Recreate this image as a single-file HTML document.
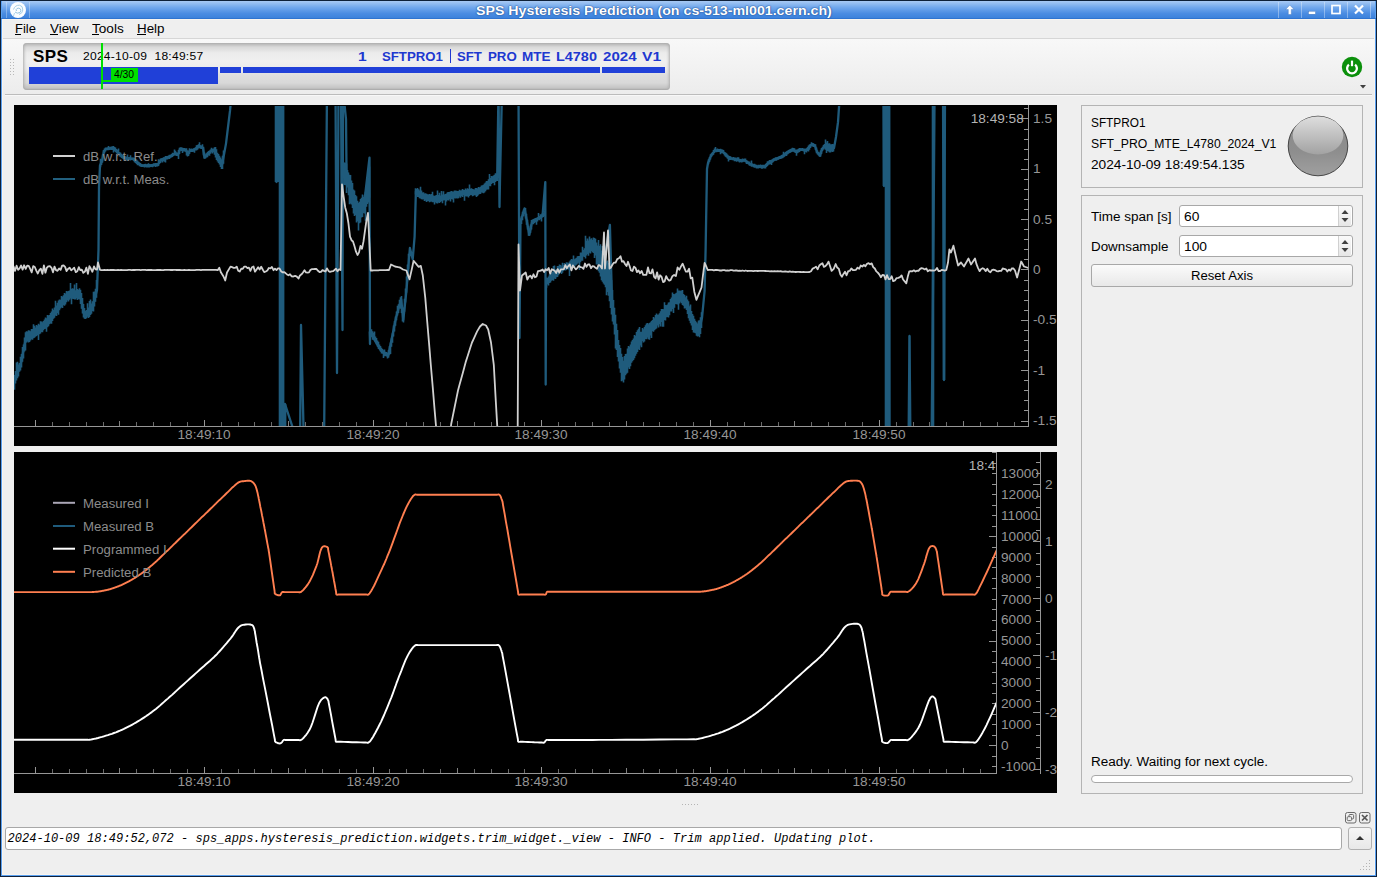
<!DOCTYPE html><html><head><meta charset="utf-8"><style>
html,body{margin:0;padding:0;width:1377px;height:877px;overflow:hidden;background:#efefef;}
body{position:relative;font-family:"Liberation Sans",sans-serif;}
</style></head><body><div style="position:absolute;left:0px;top:0px;width:1377px;height:877px;background:#0e2038;"></div><div style="position:absolute;left:1px;top:1px;width:1375px;height:875px;background:#5aa0f0;"></div><div style="position:absolute;left:2px;top:19px;width:1373px;height:856px;background:#f8f4ef;"></div><div style="position:absolute;left:3px;top:20px;width:1371px;height:854px;background:#efefef;"></div><div style="position:absolute;left:2px;top:1px;width:1373px;height:18px;background:linear-gradient(#a8caf4 0%,#72a8ec 35%,#4a8ce2 70%,#3a80da 100%);"></div><div style="position:absolute;left:1px;top:18px;width:1375px;height:1px;background:#2f74d0;"></div><div style="position:absolute;left:476px;top:4.84px;font:normal bold 12px/12px 'Liberation Sans', sans-serif;color:#fff;letter-spacing:0px;white-space:pre;transform:scaleX(1.183);transform-origin:left top;text-shadow:0 0 1.5px #1a4a90, 0 0 1px #1a4a90;">SPS Hysteresis Prediction (on cs-513-ml001.cern.ch)</div><div style="position:absolute;left:1278px;top:2px;width:1px;height:16px;background:rgba(255,255,255,0.35);"></div><div style="position:absolute;left:1301px;top:2px;width:1px;height:16px;background:rgba(255,255,255,0.35);"></div><div style="position:absolute;left:1324px;top:2px;width:1px;height:16px;background:rgba(255,255,255,0.35);"></div><div style="position:absolute;left:1347px;top:2px;width:1px;height:16px;background:rgba(255,255,255,0.35);"></div><div style="position:absolute;left:1370px;top:2px;width:1px;height:16px;background:rgba(255,255,255,0.35);"></div><svg style="position:absolute;left:9px;top:1px" width="18" height="18"><circle cx="9" cy="9" r="8" fill="#fbfdff"/><path d="M4.5 8.5 Q6 4 10.5 4.2 Q14 4.8 13.8 9 Q13.5 12.5 10 13.5" fill="none" stroke="#9cc8e2" stroke-width="0.9"/><path d="M6 11 Q8 13 11 11.5 Q12.5 10 11.5 8 Q10 6.5 8 7.5 Q6.5 8.5 7.5 10" fill="none" stroke="#8cbede" stroke-width="0.9"/><path d="M5.5 12 L4.5 15" stroke="#a8d0e8" stroke-width="0.9"/></svg><div style="position:absolute;left:6px;top:2px;width:1px;height:16px;background:rgba(255,255,255,0.3);"></div><div style="position:absolute;left:29px;top:2px;width:1px;height:16px;background:rgba(255,255,255,0.3);"></div><svg style="position:absolute;left:1280px;top:2px" width="95" height="16"><path d="M9.8 3 L14 7.5 L11.3 7.5 L11.3 12.5 L8.3 12.5 L8.3 7.5 L5.6 7.5 Z" fill="#fff" stroke="#3a70b8" stroke-width="0.4"/><rect x="28.5" y="9.2" width="7" height="3" fill="#fff" stroke="#3a70b8" stroke-width="0.4"/><rect x="52" y="3.5" width="8" height="8" fill="none" stroke="#fff" stroke-width="1.7"/><path d="M75 3.5 L83 11.5 M83 3.5 L75 11.5" stroke="#fff" stroke-width="2.2"/></svg><div style="position:absolute;left:3px;top:20px;width:1371px;height:18px;background:#efefef;"></div><div style="position:absolute;left:3px;top:38px;width:1371px;height:1px;background:#d6d6d6;"></div><div style="position:absolute;left:15px;top:23.44px;font:normal normal 12px/12px 'Liberation Sans', sans-serif;color:#000;letter-spacing:0px;white-space:pre;transform:scaleX(1.0810810810810811);transform-origin:left top;">File</div><div style="position:absolute;left:49.5px;top:23.44px;font:normal normal 12px/12px 'Liberation Sans', sans-serif;color:#000;letter-spacing:0px;white-space:pre;transform:scaleX(1.1137254901960785);transform-origin:left top;">View</div><div style="position:absolute;left:92px;top:23.44px;font:normal normal 12px/12px 'Liberation Sans', sans-serif;color:#000;letter-spacing:0px;white-space:pre;transform:scaleX(1.1320754716981132);transform-origin:left top;">Tools</div><div style="position:absolute;left:136.8px;top:23.44px;font:normal normal 12px/12px 'Liberation Sans', sans-serif;color:#000;letter-spacing:0px;white-space:pre;transform:scaleX(1.1140350877192982);transform-origin:left top;">Help</div><div style="position:absolute;left:15px;top:34px;width:6px;height:1px;background:#000;"></div><div style="position:absolute;left:50px;top:34px;width:8px;height:1px;background:#000;"></div><div style="position:absolute;left:92px;top:34px;width:7px;height:1px;background:#000;"></div><div style="position:absolute;left:137px;top:34px;width:9px;height:1px;background:#000;"></div><div style="position:absolute;left:3px;top:39px;width:1371px;height:56px;background:linear-gradient(#f8f8f8,#ececec);"></div><div style="position:absolute;left:5px;top:94px;width:1367px;height:1px;background:#bcbcbc;"></div><div style="position:absolute;left:5px;top:95px;width:1367px;height:1px;background:#f8f8f8;"></div><div style="position:absolute;left:10px;top:59px;width:1px;height:1px;background:#b8b8b8;"></div><div style="position:absolute;left:13px;top:59px;width:1px;height:1px;background:#b8b8b8;"></div><div style="position:absolute;left:10px;top:62px;width:1px;height:1px;background:#b8b8b8;"></div><div style="position:absolute;left:13px;top:62px;width:1px;height:1px;background:#b8b8b8;"></div><div style="position:absolute;left:10px;top:65px;width:1px;height:1px;background:#b8b8b8;"></div><div style="position:absolute;left:13px;top:65px;width:1px;height:1px;background:#b8b8b8;"></div><div style="position:absolute;left:10px;top:68px;width:1px;height:1px;background:#b8b8b8;"></div><div style="position:absolute;left:13px;top:68px;width:1px;height:1px;background:#b8b8b8;"></div><div style="position:absolute;left:10px;top:71px;width:1px;height:1px;background:#b8b8b8;"></div><div style="position:absolute;left:13px;top:71px;width:1px;height:1px;background:#b8b8b8;"></div><div style="position:absolute;left:10px;top:74px;width:1px;height:1px;background:#b8b8b8;"></div><div style="position:absolute;left:13px;top:74px;width:1px;height:1px;background:#b8b8b8;"></div><div style="position:absolute;left:23px;top:43px;width:647px;height:47px;border-radius:4px;background:linear-gradient(#b0b0b0 0px,#d8d8d8 4px,#ececec 10px,#f0f0f0 18px,#ebebeb 26px,#dedede 32px,#d8d8d8 40px,#c4c4c4 45px,#a8a8a8 47px);box-shadow:inset 3px 0 3px -2px #aaa, inset -3px 0 3px -2px #aaa;"></div><div style="position:absolute;left:33px;top:47.61px;font:normal bold 17px/17px 'Liberation Sans', sans-serif;color:#000;letter-spacing:0.4px;white-space:pre;">SPS</div><div style="position:absolute;left:83px;top:50.73px;font:normal normal 11.3px/11.3px 'Liberation Sans', sans-serif;color:#000;letter-spacing:0.25px;white-space:pre;transform:scaleX(1.065);transform-origin:left top;">2024-10-09  18:49:57</div><div style="position:absolute;left:29px;top:67px;width:189px;height:17px;background:#2040d8;"></div><div style="position:absolute;left:220px;top:67px;width:21px;height:6px;background:#2040d8;"></div><div style="position:absolute;left:243px;top:67px;width:357px;height:6px;background:#2040d8;"></div><div style="position:absolute;left:602px;top:67px;width:63px;height:6px;background:#2040d8;"></div><div style="position:absolute;left:100.5px;top:43px;width:2px;height:46px;background:#00e000;"></div><div style="position:absolute;left:101px;top:80px;width:10px;height:2px;background:#00e000;"></div><div style="position:absolute;left:111px;top:68px;width:27px;height:14px;background:#00e000;"></div><div style="position:absolute;left:114px;top:69.53px;font:normal normal 10px/10px 'Liberation Sans', sans-serif;color:#000;letter-spacing:0px;white-space:pre;transform:scaleX(1.03);transform-origin:left top;">4/30</div><div style="position:absolute;left:358px;top:50.30px;font:normal bold 13px/13px 'Liberation Sans', sans-serif;color:#2038d0;letter-spacing:0px;white-space:pre;transform:scaleX(1.2);transform-origin:left top;">1</div><div style="position:absolute;left:382px;top:50.30px;font:normal bold 13px/13px 'Liberation Sans', sans-serif;color:#2038d0;letter-spacing:0px;white-space:pre;transform:scaleX(1.015);transform-origin:left top;">SFTPRO1</div><div style="position:absolute;left:450px;top:49px;width:1px;height:14px;background:#2038d0;"></div><div style="position:absolute;left:457px;top:50.30px;font:normal bold 13px/13px 'Liberation Sans', sans-serif;color:#2038d0;letter-spacing:0px;white-space:pre;transform:scaleX(1.01);transform-origin:left top;">SFT</div><div style="position:absolute;left:487.5px;top:50.30px;font:normal bold 13px/13px 'Liberation Sans', sans-serif;color:#2038d0;letter-spacing:0px;white-space:pre;transform:scaleX(1.02);transform-origin:left top;">PRO</div><div style="position:absolute;left:521.8px;top:50.30px;font:normal bold 13px/13px 'Liberation Sans', sans-serif;color:#2038d0;letter-spacing:0px;white-space:pre;transform:scaleX(1.04);transform-origin:left top;">MTE</div><div style="position:absolute;left:556.3px;top:50.30px;font:normal bold 13px/13px 'Liberation Sans', sans-serif;color:#2038d0;letter-spacing:0px;white-space:pre;transform:scaleX(1.11);transform-origin:left top;">L4780</div><div style="position:absolute;left:603px;top:50.30px;font:normal bold 13px/13px 'Liberation Sans', sans-serif;color:#2038d0;letter-spacing:0px;white-space:pre;transform:scaleX(1.16);transform-origin:left top;">2024</div><div style="position:absolute;left:641.5px;top:50.30px;font:normal bold 13px/13px 'Liberation Sans', sans-serif;color:#2038d0;letter-spacing:0px;white-space:pre;transform:scaleX(1.2);transform-origin:left top;">V1</div><svg style="position:absolute;left:1340px;top:55px" width="24" height="24"><circle cx="12" cy="12" r="10.2" fill="#0c900c"/><path d="M8.9 9.6 A4.9 4.9 0 1 0 15.1 9.6" fill="none" stroke="#fff" stroke-width="2.3"/><line x1="12" y1="5.6" x2="12" y2="11.2" stroke="#fff" stroke-width="2.2"/></svg><svg style="position:absolute;left:1359px;top:84px" width="8" height="6"><path d="M1 1 L7 1 L4 4.5 Z" fill="#404040"/></svg><div style="position:absolute;left:14px;top:105px;width:1043px;height:341px;background:#000;overflow:hidden;"><svg width="1043" height="341" style="position:absolute;left:0;top:0" shape-rendering="crispEdges"><line x1="0" y1="321.5" x2="1014" y2="321.5" stroke="#969696" stroke-width="1"/><line x1="1014.5" y1="0" x2="1014.5" y2="322" stroke="#969696" stroke-width="1"/><line x1="21.5" y1="315" x2="21.5" y2="321" stroke="#969696"/><line x1="38.5" y1="317" x2="38.5" y2="321" stroke="#6a6a6a"/><line x1="55.5" y1="317" x2="55.5" y2="321" stroke="#6a6a6a"/><line x1="72.5" y1="317" x2="72.5" y2="321" stroke="#6a6a6a"/><line x1="89.5" y1="317" x2="89.5" y2="321" stroke="#6a6a6a"/><line x1="105.5" y1="316" x2="105.5" y2="321" stroke="#808080"/><line x1="122.5" y1="317" x2="122.5" y2="321" stroke="#6a6a6a"/><line x1="139.5" y1="317" x2="139.5" y2="321" stroke="#6a6a6a"/><line x1="156.5" y1="317" x2="156.5" y2="321" stroke="#6a6a6a"/><line x1="173.5" y1="317" x2="173.5" y2="321" stroke="#6a6a6a"/><line x1="190.5" y1="315" x2="190.5" y2="321" stroke="#969696"/><line x1="207.5" y1="317" x2="207.5" y2="321" stroke="#6a6a6a"/><line x1="224.5" y1="317" x2="224.5" y2="321" stroke="#6a6a6a"/><line x1="240.5" y1="317" x2="240.5" y2="321" stroke="#6a6a6a"/><line x1="257.5" y1="317" x2="257.5" y2="321" stroke="#6a6a6a"/><line x1="274.5" y1="316" x2="274.5" y2="321" stroke="#808080"/><line x1="291.5" y1="317" x2="291.5" y2="321" stroke="#6a6a6a"/><line x1="308.5" y1="317" x2="308.5" y2="321" stroke="#6a6a6a"/><line x1="325.5" y1="317" x2="325.5" y2="321" stroke="#6a6a6a"/><line x1="342.5" y1="317" x2="342.5" y2="321" stroke="#6a6a6a"/><line x1="359.5" y1="315" x2="359.5" y2="321" stroke="#969696"/><line x1="375.5" y1="317" x2="375.5" y2="321" stroke="#6a6a6a"/><line x1="392.5" y1="317" x2="392.5" y2="321" stroke="#6a6a6a"/><line x1="409.5" y1="317" x2="409.5" y2="321" stroke="#6a6a6a"/><line x1="426.5" y1="317" x2="426.5" y2="321" stroke="#6a6a6a"/><line x1="443.5" y1="316" x2="443.5" y2="321" stroke="#808080"/><line x1="460.5" y1="317" x2="460.5" y2="321" stroke="#6a6a6a"/><line x1="477.5" y1="317" x2="477.5" y2="321" stroke="#6a6a6a"/><line x1="494.5" y1="317" x2="494.5" y2="321" stroke="#6a6a6a"/><line x1="510.5" y1="317" x2="510.5" y2="321" stroke="#6a6a6a"/><line x1="527.5" y1="315" x2="527.5" y2="321" stroke="#969696"/><line x1="544.5" y1="317" x2="544.5" y2="321" stroke="#6a6a6a"/><line x1="561.5" y1="317" x2="561.5" y2="321" stroke="#6a6a6a"/><line x1="578.5" y1="317" x2="578.5" y2="321" stroke="#6a6a6a"/><line x1="595.5" y1="317" x2="595.5" y2="321" stroke="#6a6a6a"/><line x1="612.5" y1="316" x2="612.5" y2="321" stroke="#808080"/><line x1="629.5" y1="317" x2="629.5" y2="321" stroke="#6a6a6a"/><line x1="645.5" y1="317" x2="645.5" y2="321" stroke="#6a6a6a"/><line x1="662.5" y1="317" x2="662.5" y2="321" stroke="#6a6a6a"/><line x1="679.5" y1="317" x2="679.5" y2="321" stroke="#6a6a6a"/><line x1="696.5" y1="315" x2="696.5" y2="321" stroke="#969696"/><line x1="713.5" y1="317" x2="713.5" y2="321" stroke="#6a6a6a"/><line x1="730.5" y1="317" x2="730.5" y2="321" stroke="#6a6a6a"/><line x1="747.5" y1="317" x2="747.5" y2="321" stroke="#6a6a6a"/><line x1="764.5" y1="317" x2="764.5" y2="321" stroke="#6a6a6a"/><line x1="780.5" y1="316" x2="780.5" y2="321" stroke="#808080"/><line x1="797.5" y1="317" x2="797.5" y2="321" stroke="#6a6a6a"/><line x1="814.5" y1="317" x2="814.5" y2="321" stroke="#6a6a6a"/><line x1="831.5" y1="317" x2="831.5" y2="321" stroke="#6a6a6a"/><line x1="848.5" y1="317" x2="848.5" y2="321" stroke="#6a6a6a"/><line x1="865.5" y1="315" x2="865.5" y2="321" stroke="#969696"/><line x1="882.5" y1="317" x2="882.5" y2="321" stroke="#6a6a6a"/><line x1="899.5" y1="317" x2="899.5" y2="321" stroke="#6a6a6a"/><line x1="915.5" y1="317" x2="915.5" y2="321" stroke="#6a6a6a"/><line x1="932.5" y1="317" x2="932.5" y2="321" stroke="#6a6a6a"/><line x1="949.5" y1="316" x2="949.5" y2="321" stroke="#808080"/><line x1="966.5" y1="317" x2="966.5" y2="321" stroke="#6a6a6a"/><line x1="983.5" y1="317" x2="983.5" y2="321" stroke="#6a6a6a"/><line x1="1000.5" y1="317" x2="1000.5" y2="321" stroke="#6a6a6a"/><line x1="1007" y1="316.5" x2="1014" y2="316.5" stroke="#969696"/><line x1="1010" y1="305.5" x2="1014" y2="305.5" stroke="#969696"/><line x1="1010" y1="295.5" x2="1014" y2="295.5" stroke="#969696"/><line x1="1010" y1="285.5" x2="1014" y2="285.5" stroke="#969696"/><line x1="1010" y1="275.5" x2="1014" y2="275.5" stroke="#969696"/><line x1="1007" y1="265.5" x2="1014" y2="265.5" stroke="#969696"/><line x1="1010" y1="255.5" x2="1014" y2="255.5" stroke="#969696"/><line x1="1010" y1="245.5" x2="1014" y2="245.5" stroke="#969696"/><line x1="1010" y1="235.5" x2="1014" y2="235.5" stroke="#969696"/><line x1="1010" y1="225.5" x2="1014" y2="225.5" stroke="#969696"/><line x1="1007" y1="215.5" x2="1014" y2="215.5" stroke="#969696"/><line x1="1010" y1="205.5" x2="1014" y2="205.5" stroke="#969696"/><line x1="1010" y1="195.5" x2="1014" y2="195.5" stroke="#969696"/><line x1="1010" y1="185.5" x2="1014" y2="185.5" stroke="#969696"/><line x1="1010" y1="175.5" x2="1014" y2="175.5" stroke="#969696"/><line x1="1007" y1="164.5" x2="1014" y2="164.5" stroke="#969696"/><line x1="1010" y1="154.5" x2="1014" y2="154.5" stroke="#969696"/><line x1="1010" y1="144.5" x2="1014" y2="144.5" stroke="#969696"/><line x1="1010" y1="134.5" x2="1014" y2="134.5" stroke="#969696"/><line x1="1010" y1="124.5" x2="1014" y2="124.5" stroke="#969696"/><line x1="1007" y1="114.5" x2="1014" y2="114.5" stroke="#969696"/><line x1="1010" y1="104.5" x2="1014" y2="104.5" stroke="#969696"/><line x1="1010" y1="94.5" x2="1014" y2="94.5" stroke="#969696"/><line x1="1010" y1="84.5" x2="1014" y2="84.5" stroke="#969696"/><line x1="1010" y1="74.5" x2="1014" y2="74.5" stroke="#969696"/><line x1="1007" y1="64.5" x2="1014" y2="64.5" stroke="#969696"/><line x1="1010" y1="54.5" x2="1014" y2="54.5" stroke="#969696"/><line x1="1010" y1="44.5" x2="1014" y2="44.5" stroke="#969696"/><line x1="1010" y1="34.5" x2="1014" y2="34.5" stroke="#969696"/><line x1="1010" y1="24.5" x2="1014" y2="24.5" stroke="#969696"/><line x1="1007" y1="13.5" x2="1014" y2="13.5" stroke="#969696"/><line x1="1010" y1="3.5" x2="1014" y2="3.5" stroke="#969696"/></svg><svg width="1043" height="341" style="position:absolute;left:0;top:0"><clipPath id="ct"><rect x="0" y="1" width="1014" height="320"/></clipPath><g clip-path="url(#ct)"><polyline points="-2.0,287.0 1.5,271.0 6.6,260.0 11.9,233.0 18.5,229.0 29.7,220.0 39.3,210.0 46.7,198.4 53.4,191.0 60.0,189.0 66.0,189.0 70.5,211.0 78.6,202.0 83.0,185.0 84.5,145.0 85.0,82.0 86.0,60.4 88.0,56.0 90.0,46.2 92.0,44.0 99.5,43.0 104.0,47.3 108.0,51.6 113.0,53.8 119.0,53.8 123.0,57.1 127.0,60.4 135.0,60.9 144.0,59.3 147.0,54.9 156.0,51.6 161.0,48.4 164.0,50.0 166.0,44.0 172.0,45.1 174.0,49.5 176.0,45.1 179.0,45.1 183.0,43.0 185.0,40.8 189.0,43.0 190.5,52.7 193.0,49.5 198.0,45.1 201.0,46.2 203.0,51.6 206.0,56.0 208.0,60.0 210.0,49.5 212.0,38.6 214.0,22.2 216.0,5.9 217.0,-5.0 218.0,-15.0 261.0,-15.0 262.5,-15.0 262.5,77.0 264.0,-15.0 266.0,-15.0 267.5,345.0 269.0,-15.0 269.0,345.0 271.0,345.0 271.0,299.0 286.0,345.0 287.0,220.0 289.0,301.0 290.0,345.0 310.0,345.0 313.0,-15.0 321.5,-15.0 323.0,268.0 324.5,-15.0 327.0,-15.0 328.5,225.0 329.0,-15.0 332.0,14.0 332.5,65.0 338.0,91.0 344.0,109.0 350.0,100.0 355.5,52.7 356.0,239.0 355.7,227.0 367.0,245.6 374.2,250.8 382.0,212.8 387.2,194.3 389.3,214.8 392.4,186.0 395.9,143.0 398.7,154.3 400.6,131.7 401.9,86.2 412.8,92.8 423.7,94.2 434.6,91.3 449.1,87.7 463.6,87.0 470.9,82.6 478.1,74.6 483.2,71.7 484.5,-15.0 485.5,102.0 486.0,75.0 488.0,-15.0 504.5,-15.0 505.5,233.0 506.5,116.7 510.6,103.5 515.3,129.8 518.1,116.7 528.5,111.0 531.3,77.1 531.7,279.5 532.0,178.0 538.0,172.0 545.0,165.0 556.0,160.0 566.0,154.0 574.0,141.0 581.0,140.0 590.0,157.0 595.9,120.0 598.0,195.0 603.9,243.0 609.0,267.0 615.3,251.0 624.4,235.0 636.0,223.0 644.0,215.0 654.0,205.0 661.0,194.0 667.0,191.0 673.0,200.0 677.0,213.0 681.0,223.0 685.0,226.0 688.0,213.0 690.6,186.0 691.6,145.0 693.0,64.0 694.0,58.0 697.0,50.6 701.0,45.6 706.0,45.6 709.0,46.9 715.0,53.0 726.0,55.5 731.0,55.5 736.0,59.2 743.0,61.7 751.0,61.7 754.0,58.0 761.0,54.3 768.0,51.8 774.0,47.0 779.0,44.4 782.0,46.9 786.0,44.4 792.0,45.6 798.0,39.0 801.0,41.0 803.0,46.9 806.0,50.6 808.0,44.4 811.0,40.7 816.0,43.1 820.0,43.0 822.0,32.0 824.0,17.2 825.0,2.4 826.0,-15.0 869.5,-15.0 870.0,81.0 871.5,-15.0 873.5,-15.0 873.0,345.0 875.0,-15.0 875.5,345.0 894.5,345.0 895.5,231.0 896.5,345.0 917.5,345.0 919.5,130.0 920.6,-15.0 929.0,-15.0 930.0,275.0 931.0,-15.0" fill="none" stroke="#1f5b7c" stroke-width="2.3" stroke-linejoin="round"/><path d="M0.5 270.1V284.7M1.5 266.0V278.4M2.5 257.6V275.5M3.5 256.8V273.3M4.5 259.6V271.6M5.5 258.0V266.7M6.5 251.8V265.6M7.5 249.0V262.5M8.5 242.1V256.8M9.5 239.4V253.5M10.5 232.5V246.4M11.5 227.2V245.4M12.5 226.3V237.4M13.5 226.5V236.4M14.5 225.3V237.5M15.5 225.5V236.9M16.5 226.2V235.4M17.5 224.1V234.2M18.5 223.9V234.8M19.5 219.2V233.3M20.5 220.8V232.8M21.5 222.5V231.7M22.5 219.9V231.0M23.5 220.7V230.1M24.5 218.8V234.9M25.5 219.8V229.3M26.5 216.3V228.4M27.5 216.6V227.1M28.5 217.2V227.2M29.5 215.9V225.3M30.5 214.4V223.9M31.5 212.5V223.7M32.5 213.3V226.7M33.5 209.9V222.2M34.5 210.5V221.2M35.5 210.0V219.2M36.5 207.9V218.5M37.5 206.6V218.8M38.5 203.6V216.0M39.5 205.1V213.8M40.5 202.6V212.7M41.5 195.8V210.6M42.5 200.5V211.1M43.5 197.8V208.1M44.5 195.5V209.8M45.5 194.6V205.2M46.5 194.7V203.6M47.5 191.1V202.2M48.5 191.7V203.0M49.5 190.3V200.0M50.5 188.0V200.8M51.5 188.8V199.5M52.5 186.1V197.3M53.5 186.6V195.3M54.5 186.0V196.4M55.5 185.5V194.7M56.5 178.1V193.5M57.5 184.1V199.2M58.5 183.3V193.8M59.5 183.7V194.0M60.5 179.6V194.4M61.5 185.2V194.5M62.5 178.1V193.3M63.5 184.0V195.1M64.5 185.0V193.9M65.5 183.2V194.6M66.5 184.8V198.9M67.5 188.0V203.7M68.5 192.9V208.6M69.5 199.1V212.6M70.5 202.9V213.7M71.5 205.9V214.0M72.5 204.9V213.3M73.5 198.2V211.8M74.5 202.5V213.0M75.5 195.9V211.9M76.5 194.4V210.0M77.5 198.6V208.8M78.5 196.3V206.1M79.5 186.8V206.6M80.5 186.6V201.4M81.5 183.7V196.7M82.5 175.0V192.8M86.5 53.7V62.3M87.5 54.3V59.9M88.5 49.5V57.6M89.5 45.0V52.5M90.5 43.4V48.2M91.5 42.5V46.5M92.5 42.8V45.0M93.5 42.4V45.2M94.5 41.1V45.3M95.5 42.3V45.1M96.5 41.7V44.6M97.5 41.4V45.1M98.5 41.3V45.0M99.5 41.1V47.6M100.5 42.0V46.0M101.5 42.5V46.9M102.5 44.0V48.2M103.5 44.9V48.9M104.5 43.5V49.9M105.5 47.2V51.4M106.5 47.5V51.8M107.5 48.8V53.1M108.5 49.9V53.6M109.5 50.8V54.0M110.5 50.9V54.0M111.5 51.2V55.4M112.5 51.7V55.4M113.5 49.6V55.7M114.5 51.9V55.5M115.5 52.1V54.9M116.5 50.3V55.5M117.5 52.6V55.0M118.5 52.4V54.8M119.5 52.6V55.7M120.5 52.9V57.2M121.5 54.0V58.0M122.5 54.4V58.9M123.5 55.4V60.3M124.5 56.8V60.2M125.5 57.6V61.2M126.5 58.1V61.5M127.5 59.1V62.1M128.5 59.3V62.1M129.5 59.4V61.7M130.5 59.1V62.6M131.5 58.7V61.9M132.5 59.5V62.4M133.5 59.0V62.5M134.5 58.2V62.4M135.5 59.1V62.6M136.5 59.3V61.9M137.5 58.9V61.9M138.5 59.0V62.3M139.5 58.3V61.6M140.5 58.3V61.1M141.5 58.1V62.1M142.5 58.0V61.6M143.5 58.0V61.5M144.5 54.3V61.0M145.5 54.7V58.8M146.5 53.5V58.1M147.5 53.2V56.3M148.5 53.1V57.5M149.5 52.3V55.9M150.5 52.3V56.8M151.5 51.1V57.5M152.5 51.0V54.6M153.5 50.9V54.5M154.5 50.4V53.8M155.5 49.8V53.9M156.5 49.7V52.8M157.5 49.1V52.4M158.5 47.8V51.9M159.5 47.9V51.0M160.5 44.6V50.5M161.5 45.7V50.6M162.5 47.3V51.1M163.5 47.9V51.1M164.5 45.1V53.9M165.5 42.7V48.9M166.5 42.3V45.6M167.5 42.3V45.9M168.5 42.8V47.9M169.5 43.1V46.4M170.5 43.0V46.4M171.5 43.6V46.8M172.5 43.3V50.4M173.5 45.6V51.5M174.5 46.3V51.0M175.5 43.2V49.0M176.5 44.1V47.0M177.5 43.5V47.0M178.5 44.0V46.9M179.5 43.4V46.8M180.5 42.9V47.7M181.5 42.3V45.6M182.5 40.3V45.5M183.5 40.1V44.7M184.5 39.3V43.6M185.5 37.3V42.9M186.5 40.2V43.7M187.5 40.5V44.1M188.5 39.2V44.1M189.5 41.7V50.5M190.5 47.5V53.4M191.5 49.4V53.5M192.5 48.2V52.4M193.5 47.1V52.3M194.5 46.1V50.4M195.5 45.5V50.8M196.5 44.4V48.7M197.5 42.8V47.3M198.5 43.8V48.6M199.5 43.6V47.2M200.5 42.2V49.7M201.5 42.1V52.5M202.5 44.2V55.1M203.5 47.7V56.6M204.5 49.1V58.0M205.5 50.7V59.6M206.5 52.5V62.1M207.5 54.3V63.9M208.5 50.8V64.0M209.5 45.4V58.7M327.5 54.6V78.3M328.5 57.0V70.9M329.5 57.2V73.6M330.5 57.4V80.0M331.5 57.8V80.2M332.5 58.6V88.0M333.5 64.9V82.5M334.5 67.5V90.3M335.5 69.7V99.2M336.5 70.1V98.6M337.5 75.5V99.6M338.5 77.9V103.0M339.5 84.5V108.4M340.5 85.4V111.1M341.5 90.0V110.0M342.5 91.2V117.4M343.5 95.7V116.3M344.5 98.1V125.6M345.5 96.8V118.3M346.5 93.9V117.6M347.5 92.7V112.5M348.5 89.6V112.0M349.5 92.1V108.0M350.5 90.3V108.6M351.5 86.7V115.8M352.5 81.2V101.8M353.5 76.1V99.1M354.5 72.8V97.6M355.5 61.6V92.8M401.5 83.2V89.5M402.5 83.9V90.0M403.5 83.1V91.9M404.5 84.3V92.0M405.5 85.5V93.3M406.5 81.8V93.6M407.5 85.6V94.3M408.5 87.4V94.4M409.5 87.2V94.2M410.5 88.5V96.1M411.5 88.2V95.5M412.5 88.7V97.0M413.5 89.3V96.3M414.5 89.6V96.0M415.5 89.0V97.3M416.5 89.6V96.8M417.5 88.9V96.4M418.5 86.8V97.3M419.5 90.4V97.3M420.5 90.9V99.6M421.5 90.6V97.2M422.5 90.1V98.3M423.5 85.4V98.4M424.5 89.9V97.5M425.5 87.7V97.9M426.5 90.5V96.9M427.5 85.9V95.9M428.5 89.5V98.3M429.5 86.2V95.5M430.5 89.4V95.2M431.5 88.9V100.5M432.5 88.4V96.4M433.5 87.2V95.1M434.5 87.0V95.6M435.5 87.1V94.3M436.5 86.5V96.6M437.5 86.1V94.0M438.5 86.4V94.5M439.5 86.5V97.5M440.5 85.4V93.2M441.5 85.4V93.5M442.5 85.7V93.2M443.5 85.9V93.5M444.5 86.0V93.3M445.5 84.7V91.4M446.5 85.4V92.8M447.5 85.3V91.1M448.5 84.1V91.9M449.5 84.7V90.3M450.5 85.0V95.7M451.5 83.4V91.2M452.5 84.5V91.4M453.5 83.3V91.5M454.5 83.9V92.6M455.5 79.4V91.1M456.5 83.8V90.0M457.5 83.2V90.1M458.5 83.9V91.3M459.5 84.2V90.7M460.5 84.4V90.0M461.5 82.9V90.6M462.5 82.9V92.1M463.5 83.6V91.1M464.5 82.1V89.7M465.5 82.6V89.0M466.5 81.7V89.1M467.5 80.5V87.6M468.5 80.2V87.8M469.5 79.7V88.3M470.5 78.5V87.5M471.5 77.6V86.2M472.5 76.0V84.8M473.5 76.0V84.4M474.5 74.3V84.4M475.5 69.1V80.9M476.5 72.9V81.2M477.5 71.1V79.1M478.5 71.3V78.0M479.5 70.6V77.9M480.5 69.8V80.3M481.5 68.3V77.0M482.5 68.9V76.0M483.5 67.4V76.1M507.5 110.9V119.0M508.5 106.8V115.3M509.5 104.5V111.3M510.5 102.8V108.3M511.5 102.9V113.4M512.5 108.8V119.7M513.5 114.8V124.5M514.5 121.0V130.8M515.5 124.9V130.8M516.5 119.6V128.0M517.5 114.9V124.5M518.5 114.4V118.9M519.5 114.0V119.3M520.5 113.4V118.1M521.5 112.9V117.0M522.5 112.7V119.8M523.5 112.2V116.4M524.5 108.0V114.7M525.5 110.9V115.3M526.5 109.2V114.1M527.5 109.3V116.6M528.5 107.9V112.5M529.5 107.9V112.1M530.5 105.4V110.9M532.5 172.4V182.7M533.5 173.0V179.2M534.5 171.4V180.5M535.5 169.5V178.0M536.5 168.6V177.4M537.5 167.8V175.8M538.5 166.4V175.0M539.5 160.9V175.7M540.5 160.6V173.5M541.5 164.9V174.1M542.5 164.2V172.2M543.5 161.0V171.9M544.5 160.9V170.3M545.5 159.4V167.3M546.5 160.1V167.7M547.5 161.2V168.9M548.5 157.7V167.8M549.5 160.1V166.0M550.5 158.0V165.0M551.5 159.6V165.5M552.5 157.3V164.9M553.5 157.5V163.9M554.5 158.1V164.4M555.5 156.6V171.0M556.5 155.2V164.9M557.5 154.1V164.0M558.5 154.6V163.1M559.5 150.4V162.6M560.5 154.3V162.0M561.5 153.4V160.6M562.5 152.8V159.8M563.5 151.2V158.8M564.5 151.0V157.8M565.5 150.9V165.0M566.5 147.4V157.3M567.5 147.6V155.8M568.5 141.8V155.8M569.5 145.1V151.4M570.5 143.3V151.9M571.5 130.8V153.4M572.5 135.8V150.5M573.5 133.6V149.1M574.5 135.6V150.7M575.5 131.4V147.7M576.5 134.2V148.4M577.5 133.3V146.0M578.5 135.0V147.3M579.5 132.4V148.0M580.5 132.9V153.0M581.5 133.7V150.6M582.5 137.4V159.5M583.5 140.6V159.2M584.5 134.9V166.3M585.5 140.9V167.7M586.5 139.3V171.4M587.5 145.6V175.2M588.5 141.0V176.7M589.5 150.3V178.6M590.5 151.5V179.8M591.5 150.4V182.3M592.5 156.6V190.3M593.5 155.5V187.1M594.5 158.0V190.7M595.5 163.7V196.2M596.5 169.3V203.0M597.5 175.1V209.4M598.5 185.0V216.4M599.5 195.0V219.4M600.5 202.7V229.5M601.5 209.8V243.4M602.5 218.7V245.1M603.5 225.1V252.0M604.5 235.1V256.5M605.5 240.0V263.6M606.5 242.9V267.8M607.5 248.7V276.3M608.5 251.9V275.6M609.5 255.7V277.4M610.5 250.9V274.6M611.5 249.0V270.2M612.5 248.7V268.7M613.5 243.5V267.7M614.5 240.9V262.5M615.5 241.8V263.9M616.5 239.6V261.3M617.5 236.5V257.7M618.5 235.1V256.2M619.5 233.4V254.9M620.5 230.1V253.2M621.5 230.9V250.8M622.5 226.9V248.8M623.5 225.3V246.9M624.5 223.7V244.2M625.5 221.9V244.9M626.5 226.7V240.4M627.5 226.8V242.3M628.5 223.0V236.0M629.5 224.3V237.5M630.5 222.1V236.6M631.5 220.3V234.1M632.5 218.6V234.2M633.5 218.0V232.6M634.5 219.3V234.3M635.5 218.0V234.7M636.5 217.2V230.4M637.5 216.1V233.1M638.5 215.0V226.1M639.5 211.9V226.7M640.5 213.2V225.3M641.5 210.1V224.2M642.5 208.6V223.4M643.5 209.7V220.5M644.5 209.4V222.5M645.5 208.3V219.3M646.5 206.3V221.6M647.5 204.0V216.9M648.5 204.1V221.7M649.5 204.2V221.7M650.5 197.2V214.9M651.5 200.1V215.5M652.5 200.2V212.3M653.5 199.5V212.1M654.5 197.6V212.4M655.5 197.2V210.2M656.5 193.9V206.4M657.5 192.6V206.4M658.5 187.6V204.1M659.5 189.0V207.9M660.5 189.2V202.7M661.5 188.4V199.0M662.5 187.8V199.2M663.5 183.4V199.5M664.5 185.6V204.7M665.5 185.6V198.4M666.5 185.7V196.8M667.5 185.6V198.3M668.5 185.0V200.1M669.5 189.0V200.8M670.5 190.0V203.5M671.5 192.3V203.3M672.5 190.8V205.0M673.5 194.6V208.9M674.5 196.2V213.2M675.5 201.2V215.7M676.5 199.5V218.2M677.5 205.9V220.5M678.5 209.1V225.1M679.5 210.8V227.4M680.5 213.7V227.7M681.5 215.7V228.3M682.5 217.2V230.8M683.5 218.4V231.6M684.5 215.4V230.9M685.5 215.2V232.3M686.5 212.3V228.9M687.5 207.3V223.0M357.5 224.3V231.3M358.5 226.2V234.7M359.5 227.7V234.2M360.5 226.4V234.9M361.5 231.6V237.3M362.5 233.1V239.4M363.5 235.5V241.8M364.5 236.8V244.1M365.5 239.6V244.5M366.5 240.9V246.6M367.5 242.7V248.5M368.5 244.0V248.7M369.5 245.2V253.1M370.5 244.6V251.2M371.5 246.8V250.9M372.5 247.1V251.6M373.5 247.9V253.6M374.5 245.1V252.8M375.5 241.0V249.8M376.5 237.4V248.9M377.5 233.3V241.7M378.5 228.2V237.7M379.5 220.6V231.6M380.5 216.1V226.4M381.5 211.5V220.7M382.5 206.4V215.2M383.5 200.8V210.6M384.5 199.3V208.0M385.5 194.8V202.9M386.5 192.3V203.7M387.5 190.9V208.1M388.5 202.5V216.4M389.5 202.5V217.4M390.5 193.8V206.8M391.5 183.4V197.5M392.5 171.6V187.7M393.5 159.4V176.6M394.5 148.7V164.0M261.5 1.0V77.0M262.5 1.0V77.0M263.5 1.0V77.0M264.5 1.0V77.0M265.5 1.0V321.0M266.5 1.0V321.0M267.5 1.0V321.0M268.5 1.0V321.0M269.5 1.0V321.0M270.5 299.0V321.0M271.5 299.0V321.0M869.5 1.0V81.0M870.5 1.0V81.0M871.5 1.0V321.0M872.5 1.0V321.0M873.5 1.0V321.0M874.5 1.0V321.0M875.5 1.0V321.0M918.5 1.0V321.0M919.5 1.0V321.0M929.5 1.0V275.0M930.5 1.0V275.0M895.5 231.0V321.0M694.5 54.2V59.2M695.5 52.0V57.1M696.5 49.3V54.6M697.5 48.3V52.0M698.5 47.0V50.6M699.5 44.9V49.7M700.5 43.6V47.9M701.5 41.9V46.7M702.5 44.4V47.2M703.5 43.6V47.1M704.5 43.9V47.0M705.5 44.0V47.1M706.5 43.8V49.3M707.5 44.2V48.2M708.5 44.5V48.0M709.5 45.1V49.1M710.5 46.9V50.6M711.5 47.4V51.8M712.5 48.3V52.6M713.5 49.5V53.8M714.5 50.5V56.6M715.5 51.0V55.0M716.5 51.3V55.1M717.5 52.3V54.7M718.5 52.6V55.2M719.5 52.0V55.2M720.5 52.6V56.2M721.5 52.5V55.9M722.5 53.2V56.7M723.5 52.2V56.2M724.5 52.3V56.5M725.5 53.7V57.5M726.5 54.0V57.1M727.5 54.4V57.4M728.5 53.6V57.3M729.5 54.1V56.6M730.5 53.4V56.6M731.5 53.4V57.2M732.5 55.2V58.9M733.5 55.8V59.0M734.5 56.4V59.6M735.5 56.5V60.7M736.5 58.1V60.7M737.5 55.4V61.7M738.5 58.4V61.4M739.5 59.2V62.2M740.5 58.8V62.7M741.5 59.6V62.5M742.5 59.8V63.5M743.5 60.5V63.5M744.5 59.8V63.5M745.5 60.0V62.9M746.5 59.6V62.7M747.5 60.0V63.7M748.5 59.8V63.7M749.5 59.7V62.9M750.5 60.1V63.6M751.5 59.0V63.4M752.5 58.1V62.1M753.5 56.2V61.0M754.5 56.3V59.8M755.5 55.1V59.4M756.5 55.0V58.9M757.5 54.7V60.0M758.5 54.2V57.7M759.5 53.2V56.7M760.5 53.2V55.8M761.5 52.3V55.8M762.5 52.2V55.8M763.5 52.0V54.8M764.5 51.6V54.8M765.5 51.1V54.0M766.5 50.8V54.0M767.5 49.9V53.6M768.5 49.5V53.3M769.5 46.8V52.4M770.5 48.2V51.7M771.5 47.0V50.7M772.5 46.2V51.1M773.5 45.7V49.6M774.5 44.9V48.8M775.5 44.5V48.1M776.5 43.9V47.7M777.5 43.4V46.9M778.5 42.7V46.8M779.5 43.1V46.8M780.5 43.2V47.2M781.5 44.8V48.0M782.5 44.5V50.8M783.5 44.5V48.2M784.5 43.8V47.6M785.5 42.9V47.0M786.5 43.2V46.0M787.5 43.3V46.0M788.5 43.1V46.0M789.5 43.6V46.2M790.5 43.6V49.3M791.5 43.4V46.7M792.5 43.5V47.4M793.5 42.3V45.9M794.5 40.5V46.4M795.5 39.5V44.7M796.5 39.0V43.1M797.5 37.2V41.2M798.5 37.9V41.5M799.5 38.3V41.9M800.5 39.1V42.1M801.5 39.2V45.1M802.5 42.6V48.2M803.5 45.6V49.6M804.5 46.9V50.4M805.5 47.8V51.8M806.5 45.6V51.7M807.5 43.0V49.0M808.5 41.8V45.9M809.5 40.0V44.5M810.5 39.0V43.6M811.5 34.6V44.7M812.5 37.4V47.9M813.5 36.1V45.9M814.5 38.5V46.6M815.5 38.2V47.6M816.5 39.3V47.6M817.5 39.2V46.6M818.5 39.1V47.1M819.5 39.2V46.6" stroke="#1f5b7c" stroke-width="1.6" fill="none"/><polyline points="-2.0,162.9 -0.5,161.4 1.0,165.9 2.6,160.7 4.1,164.8 5.6,163.3 7.1,160.5 8.6,164.6 10.1,160.3 11.7,163.9 13.2,160.6 14.7,160.8 16.2,163.8 17.7,167.4 19.2,161.1 20.8,162.0 22.3,165.6 23.8,168.5 25.3,165.2 26.8,163.6 28.4,168.8 29.9,160.4 31.4,167.7 32.9,162.6 34.4,161.3 35.9,161.1 37.5,162.8 39.0,167.3 40.5,161.6 42.0,165.2 43.5,165.8 45.1,163.4 46.6,164.9 48.1,160.6 49.6,160.5 51.1,161.9 52.6,166.1 54.2,163.8 55.7,162.8 57.2,165.3 58.7,164.1 60.2,162.7 61.8,167.1 63.3,166.3 64.8,162.2 66.3,165.2 67.8,164.7 69.3,167.9 70.9,166.6 72.4,162.6 73.9,168.8 75.4,161.1 76.9,163.8 78.4,166.8 80.0,161.4 81.5,164.4 83.0,164.5 84.0,157.5 86.0,164.8 87.5,165.1 89.0,165.1 90.5,165.0 92.0,165.2 93.5,164.9 95.0,165.1 96.5,165.0 98.1,165.0 99.6,165.0 101.1,165.2 102.6,165.2 104.1,165.0 105.6,165.1 107.1,164.8 108.6,165.1 110.1,165.1 111.6,165.2 113.1,165.2 114.6,164.9 116.1,164.9 117.6,165.1 119.1,164.8 120.6,165.0 122.2,164.8 123.7,164.8 125.2,164.8 126.7,165.1 128.2,164.8 129.7,164.9 131.2,164.9 132.7,165.2 134.2,164.8 135.7,165.0 137.2,165.0 138.7,165.2 140.2,165.2 141.7,165.2 143.2,164.9 144.8,165.0 146.3,164.9 147.8,165.2 149.3,165.2 150.8,164.8 152.3,164.8 153.8,164.9 155.3,164.9 156.8,165.0 158.3,165.0 159.8,164.9 161.3,164.8 162.8,165.0 164.3,164.9 165.8,165.0 167.4,165.2 168.9,165.1 170.4,165.0 171.9,165.1 173.4,165.1 174.9,164.8 176.4,165.2 177.9,165.1 179.4,165.2 180.9,165.1 182.4,164.9 183.9,164.9 185.4,164.8 186.9,165.1 188.4,164.8 189.9,164.8 191.5,164.9 193.0,164.8 194.5,164.9 196.0,164.8 197.5,164.8 199.0,164.8 200.5,164.8 202.0,164.9 203.7,165.2 205.3,162.7 207.0,167.6 209.5,171.5 211.2,175.5 213.0,167.5 215.0,164.1 216.5,161.6 218.1,162.2 219.6,162.8 221.1,162.9 222.7,161.6 224.2,165.7 225.7,166.5 227.3,163.6 228.8,163.8 230.3,161.6 231.9,161.7 233.4,163.1 234.9,162.7 236.4,165.9 238.0,162.2 239.5,161.5 241.0,166.7 242.6,164.4 244.1,162.3 245.6,164.5 247.2,161.7 248.7,164.5 250.2,167.1 251.8,166.5 253.3,165.6 254.8,163.0 256.4,163.4 257.9,162.0 259.5,165.2 261.0,163.6 262.5,165.1 264.0,163.4 265.5,163.3 267.0,166.2 268.5,167.3 270.0,167.1 271.5,168.1 273.0,169.4 274.5,170.3 276.0,169.3 277.7,171.4 279.4,171.5 281.1,170.8 282.8,171.6 284.5,173.5 286.0,170.4 287.5,169.3 289.0,167.5 290.5,165.2 292.0,167.4 293.5,167.6 295.0,167.4 296.5,164.8 298.0,164.2 299.5,164.2 301.0,164.0 302.5,164.0 304.0,165.8 305.5,167.0 307.0,166.8 308.5,165.1 310.0,165.9 311.5,166.5 313.0,163.4 314.5,165.9 316.0,166.9 317.5,166.4 319.0,166.2 320.5,165.0 322.0,163.6 323.5,166.3 325.0,164.3 326.5,165.0 328.0,79.5 329.6,91.4 331.2,102.4 332.8,108.2 334.4,118.0 336.0,131.6 337.5,135.2 339.0,136.5 340.5,141.3 342.0,146.7 343.5,150.0 345.0,147.4 346.5,140.9 348.0,143.8 349.5,136.4 351.0,125.7 352.5,115.1 354.0,108.0 356.7,165.5 358.2,165.5 359.8,165.4 361.3,165.4 362.8,165.3 364.3,165.3 365.9,165.2 367.4,165.2 368.9,165.2 370.4,165.1 371.9,165.1 373.5,165.0 375.0,165.0 377.0,159.5 379.0,160.5 381.0,161.5 382.7,161.8 384.3,162.2 386.0,162.5 387.5,163.5 389.0,164.5 390.7,165.0 392.4,165.5 393.9,169.9 395.5,174.3 397.6,165.1 399.6,155.8 401.3,157.8 403.0,159.9 404.7,161.9 406.8,160.9 408.8,170.5 411.3,193.1 413.1,215.3 415.0,237.6 416.8,259.8 418.7,281.7 420.5,303.6 422.4,325.5 424.0,325.5 425.5,325.5 427.1,325.5 428.7,325.5 430.2,325.5 431.8,325.5 433.4,325.5 434.9,325.5 436.5,325.5 437.2,319.0 438.9,310.6 440.6,302.2 442.3,293.9 444.0,285.5 445.6,279.6 447.2,273.7 448.8,267.9 450.4,262.0 452.0,256.1 453.5,251.5 455.0,246.8 456.5,242.1 458.0,237.5 459.7,233.8 461.4,230.1 463.1,226.4 466.0,221.5 468.7,219.0 470.4,219.8 472.0,220.5 474.2,224.5 477.0,237.5 479.8,259.8 481.6,292.6 483.5,325.5 485.1,325.5 486.6,325.5 488.2,325.5 489.7,325.5 491.3,325.5 492.8,325.5 494.4,325.5 495.9,325.5 497.5,325.5 499.0,325.5 500.6,325.5 502.1,325.5 503.7,325.5 504.5,139.5 506.0,185.5 508.0,170.5 510.2,168.7 511.7,167.5 513.3,174.5 514.8,171.8 516.4,170.6 517.9,173.4 519.5,169.3 521.0,172.3 522.5,171.4 524.0,166.1 525.6,165.8 527.1,165.5 528.6,164.5 530.1,167.0 531.6,164.3 533.1,165.3 534.7,163.0 536.2,168.7 537.7,164.3 539.2,164.9 540.7,165.7 542.2,168.0 543.7,164.1 545.3,167.7 546.8,164.4 548.3,164.4 549.8,164.2 551.3,160.2 552.8,163.2 554.3,161.1 555.9,159.5 557.4,165.4 558.9,160.4 560.4,162.5 561.9,164.3 563.4,162.8 564.9,160.9 566.5,162.2 568.0,162.3 569.5,163.8 571.0,158.5 572.5,161.9 574.0,159.4 575.5,159.5 577.0,163.2 578.5,161.1 580.0,161.4 581.5,162.8 583.0,163.8 584.5,160.2 586.0,160.5 588.0,163.5 590.0,127.5 591.0,163.5 592.5,144.5 594.0,125.5 595.5,163.5 597.0,162.4 598.5,159.5 600.0,157.6 601.6,157.6 603.2,154.1 604.9,153.3 606.5,151.3 608.0,156.7 609.5,156.1 611.0,159.0 612.5,161.1 614.0,156.8 615.5,160.8 617.0,165.5 618.5,166.0 620.0,161.6 621.5,162.9 623.0,167.1 624.5,165.4 626.0,168.3 627.6,165.9 629.2,169.9 630.8,169.9 632.4,169.8 634.0,162.4 635.5,168.2 637.0,168.4 638.5,164.4 640.1,171.8 641.6,173.3 643.1,167.3 644.6,174.6 646.1,170.3 647.6,171.9 649.1,177.1 650.6,176.4 652.2,171.1 653.7,174.2 655.2,175.7 656.7,174.9 658.4,171.2 660.1,169.9 661.9,171.1 663.6,162.4 665.3,164.8 667.0,161.4 668.6,158.7 670.2,162.7 671.8,166.5 673.5,166.7 675.1,163.8 676.7,173.3 678.3,172.7 680.3,186.7 682.4,194.8 684.1,190.7 685.8,186.6 687.5,182.5 689.0,170.1 690.6,157.8 692.2,161.4 693.7,165.0 695.2,164.8 696.7,164.9 698.3,164.8 699.8,165.3 701.3,165.0 702.8,165.0 704.3,165.2 705.9,165.5 707.4,165.5 708.9,165.2 710.4,165.1 711.9,165.6 713.4,165.4 715.0,165.6 716.5,165.2 718.0,165.2 719.5,165.6 721.0,165.5 722.6,165.3 724.1,165.9 725.6,165.7 727.1,165.9 728.6,165.5 730.2,166.0 731.7,165.5 733.2,166.0 734.7,165.8 736.2,165.8 737.8,165.9 739.3,166.2 740.8,165.8 742.3,165.8 743.8,166.0 745.4,165.9 746.9,165.8 748.4,165.9 749.9,165.9 751.4,166.0 752.9,166.1 754.5,166.1 756.0,166.4 757.5,166.2 759.0,166.3 760.5,166.2 762.1,166.3 763.6,166.1 765.1,166.3 766.6,166.2 768.1,166.7 769.7,166.6 771.2,166.4 772.7,166.6 774.2,166.9 775.7,166.4 777.3,166.9 778.8,166.7 780.3,166.8 781.8,167.0 783.3,166.8 784.8,166.9 786.4,167.0 787.9,167.2 789.4,166.9 790.9,167.2 792.4,167.1 794.0,167.1 795.5,167.0 797.0,166.2 798.7,163.6 800.3,162.9 802.0,161.6 803.6,164.3 805.3,160.5 806.8,159.3 808.4,158.2 809.9,161.8 811.4,161.2 813.0,159.4 814.5,156.6 816.0,161.0 817.6,165.9 819.7,163.8 821.7,159.0 823.2,162.6 824.8,163.7 826.4,169.6 827.9,171.7 829.5,168.9 831.0,166.7 832.6,170.3 834.2,166.1 835.7,165.9 837.3,163.4 838.9,165.0 840.4,165.1 842.0,164.8 843.6,162.6 845.2,163.8 846.7,160.5 848.3,161.5 849.9,160.0 851.4,161.3 853.0,158.8 854.6,158.2 856.1,159.3 857.7,158.4 859.2,162.1 860.8,163.5 862.3,166.4 863.8,167.6 865.4,169.6 866.9,172.2 868.4,170.0 870.0,170.2 871.5,174.4 873.0,170.2 874.6,174.0 876.1,174.1 877.7,171.2 879.2,176.2 880.9,175.5 882.6,173.1 884.3,172.8 886.0,172.2 887.6,170.4 889.1,174.5 890.7,176.4 892.3,178.3 893.8,171.6 895.3,166.3 896.8,166.2 898.4,166.3 899.9,165.3 901.5,166.6 903.0,165.7 904.5,165.8 906.1,163.9 907.6,163.1 909.2,163.5 910.7,164.4 912.3,163.4 913.8,166.3 915.3,165.2 916.9,165.5 918.4,165.5 920.0,165.7 921.5,165.0 923.0,163.0 924.6,166.2 926.1,166.0 927.7,165.0 929.2,165.1 930.8,165.6 932.3,165.0 934.0,157.5 935.4,144.5 937.0,147.5 939.4,140.7 941.0,147.5 942.5,154.0 944.1,160.5 947.0,157.5 948.5,159.5 950.0,161.5 951.5,158.8 953.0,156.2 954.5,153.5 957.0,159.5 959.0,156.5 961.0,153.5 962.5,159.2 964.1,163.1 965.6,166.1 967.2,164.0 968.7,163.2 970.2,164.1 971.8,166.1 973.3,163.8 974.9,166.2 976.4,167.3 977.9,165.2 979.5,164.7 981.0,165.1 982.5,166.1 984.1,166.4 985.6,165.8 987.2,165.9 988.7,163.5 990.2,163.8 991.8,164.3 993.3,166.5 994.9,164.6 996.4,165.7 997.9,163.3 999.5,163.5 1001.0,165.5 1003.1,172.5 1005.2,164.5 1007.2,156.5 1010.0,161.5 1011.5,162.0 1013.0,162.5 1014.5,163.0 1016.0,163.5" fill="none" stroke="#d0d0d0" stroke-width="1.8" stroke-linejoin="round"/></g><line x1="39" y1="51" x2="61" y2="51" stroke="#d0d0d0" stroke-width="2"/><line x1="39" y1="74" x2="61" y2="74" stroke="#22607f" stroke-width="2"/></svg></div><div style="position:absolute;left:14px;top:452px;width:1043px;height:341px;background:#000;overflow:hidden;"><svg width="1043" height="341" style="position:absolute;left:0;top:0" shape-rendering="crispEdges"><line x1="0" y1="321.5" x2="982" y2="321.5" stroke="#969696"/><line x1="982.5" y1="0" x2="982.5" y2="322" stroke="#969696"/><line x1="1026.5" y1="0" x2="1026.5" y2="322" stroke="#969696"/><line x1="21.5" y1="315" x2="21.5" y2="321" stroke="#969696"/><line x1="38.5" y1="317" x2="38.5" y2="321" stroke="#6a6a6a"/><line x1="55.5" y1="317" x2="55.5" y2="321" stroke="#6a6a6a"/><line x1="72.5" y1="317" x2="72.5" y2="321" stroke="#6a6a6a"/><line x1="89.5" y1="317" x2="89.5" y2="321" stroke="#6a6a6a"/><line x1="105.5" y1="316" x2="105.5" y2="321" stroke="#808080"/><line x1="122.5" y1="317" x2="122.5" y2="321" stroke="#6a6a6a"/><line x1="139.5" y1="317" x2="139.5" y2="321" stroke="#6a6a6a"/><line x1="156.5" y1="317" x2="156.5" y2="321" stroke="#6a6a6a"/><line x1="173.5" y1="317" x2="173.5" y2="321" stroke="#6a6a6a"/><line x1="190.5" y1="315" x2="190.5" y2="321" stroke="#969696"/><line x1="207.5" y1="317" x2="207.5" y2="321" stroke="#6a6a6a"/><line x1="224.5" y1="317" x2="224.5" y2="321" stroke="#6a6a6a"/><line x1="240.5" y1="317" x2="240.5" y2="321" stroke="#6a6a6a"/><line x1="257.5" y1="317" x2="257.5" y2="321" stroke="#6a6a6a"/><line x1="274.5" y1="316" x2="274.5" y2="321" stroke="#808080"/><line x1="291.5" y1="317" x2="291.5" y2="321" stroke="#6a6a6a"/><line x1="308.5" y1="317" x2="308.5" y2="321" stroke="#6a6a6a"/><line x1="325.5" y1="317" x2="325.5" y2="321" stroke="#6a6a6a"/><line x1="342.5" y1="317" x2="342.5" y2="321" stroke="#6a6a6a"/><line x1="359.5" y1="315" x2="359.5" y2="321" stroke="#969696"/><line x1="375.5" y1="317" x2="375.5" y2="321" stroke="#6a6a6a"/><line x1="392.5" y1="317" x2="392.5" y2="321" stroke="#6a6a6a"/><line x1="409.5" y1="317" x2="409.5" y2="321" stroke="#6a6a6a"/><line x1="426.5" y1="317" x2="426.5" y2="321" stroke="#6a6a6a"/><line x1="443.5" y1="316" x2="443.5" y2="321" stroke="#808080"/><line x1="460.5" y1="317" x2="460.5" y2="321" stroke="#6a6a6a"/><line x1="477.5" y1="317" x2="477.5" y2="321" stroke="#6a6a6a"/><line x1="494.5" y1="317" x2="494.5" y2="321" stroke="#6a6a6a"/><line x1="510.5" y1="317" x2="510.5" y2="321" stroke="#6a6a6a"/><line x1="527.5" y1="315" x2="527.5" y2="321" stroke="#969696"/><line x1="544.5" y1="317" x2="544.5" y2="321" stroke="#6a6a6a"/><line x1="561.5" y1="317" x2="561.5" y2="321" stroke="#6a6a6a"/><line x1="578.5" y1="317" x2="578.5" y2="321" stroke="#6a6a6a"/><line x1="595.5" y1="317" x2="595.5" y2="321" stroke="#6a6a6a"/><line x1="612.5" y1="316" x2="612.5" y2="321" stroke="#808080"/><line x1="629.5" y1="317" x2="629.5" y2="321" stroke="#6a6a6a"/><line x1="645.5" y1="317" x2="645.5" y2="321" stroke="#6a6a6a"/><line x1="662.5" y1="317" x2="662.5" y2="321" stroke="#6a6a6a"/><line x1="679.5" y1="317" x2="679.5" y2="321" stroke="#6a6a6a"/><line x1="696.5" y1="315" x2="696.5" y2="321" stroke="#969696"/><line x1="713.5" y1="317" x2="713.5" y2="321" stroke="#6a6a6a"/><line x1="730.5" y1="317" x2="730.5" y2="321" stroke="#6a6a6a"/><line x1="747.5" y1="317" x2="747.5" y2="321" stroke="#6a6a6a"/><line x1="764.5" y1="317" x2="764.5" y2="321" stroke="#6a6a6a"/><line x1="780.5" y1="316" x2="780.5" y2="321" stroke="#808080"/><line x1="797.5" y1="317" x2="797.5" y2="321" stroke="#6a6a6a"/><line x1="814.5" y1="317" x2="814.5" y2="321" stroke="#6a6a6a"/><line x1="831.5" y1="317" x2="831.5" y2="321" stroke="#6a6a6a"/><line x1="848.5" y1="317" x2="848.5" y2="321" stroke="#6a6a6a"/><line x1="865.5" y1="315" x2="865.5" y2="321" stroke="#969696"/><line x1="882.5" y1="317" x2="882.5" y2="321" stroke="#6a6a6a"/><line x1="899.5" y1="317" x2="899.5" y2="321" stroke="#6a6a6a"/><line x1="915.5" y1="317" x2="915.5" y2="321" stroke="#6a6a6a"/><line x1="932.5" y1="317" x2="932.5" y2="321" stroke="#6a6a6a"/><line x1="949.5" y1="316" x2="949.5" y2="321" stroke="#808080"/><line x1="966.5" y1="317" x2="966.5" y2="321" stroke="#6a6a6a"/><line x1="978" y1="314.5" x2="982" y2="314.5" stroke="#969696"/><line x1="978" y1="304.5" x2="982" y2="304.5" stroke="#969696"/><line x1="975" y1="293.5" x2="982" y2="293.5" stroke="#969696"/><line x1="978" y1="283.5" x2="982" y2="283.5" stroke="#969696"/><line x1="978" y1="272.5" x2="982" y2="272.5" stroke="#969696"/><line x1="978" y1="262.5" x2="982" y2="262.5" stroke="#969696"/><line x1="978" y1="251.5" x2="982" y2="251.5" stroke="#969696"/><line x1="978" y1="241.5" x2="982" y2="241.5" stroke="#969696"/><line x1="978" y1="231.5" x2="982" y2="231.5" stroke="#969696"/><line x1="978" y1="220.5" x2="982" y2="220.5" stroke="#969696"/><line x1="978" y1="210.5" x2="982" y2="210.5" stroke="#969696"/><line x1="978" y1="199.5" x2="982" y2="199.5" stroke="#969696"/><line x1="975" y1="189.5" x2="982" y2="189.5" stroke="#969696"/><line x1="978" y1="178.5" x2="982" y2="178.5" stroke="#969696"/><line x1="978" y1="168.5" x2="982" y2="168.5" stroke="#969696"/><line x1="978" y1="157.5" x2="982" y2="157.5" stroke="#969696"/><line x1="978" y1="147.5" x2="982" y2="147.5" stroke="#969696"/><line x1="978" y1="136.5" x2="982" y2="136.5" stroke="#969696"/><line x1="978" y1="126.5" x2="982" y2="126.5" stroke="#969696"/><line x1="978" y1="115.5" x2="982" y2="115.5" stroke="#969696"/><line x1="978" y1="105.5" x2="982" y2="105.5" stroke="#969696"/><line x1="978" y1="95.5" x2="982" y2="95.5" stroke="#969696"/><line x1="975" y1="84.5" x2="982" y2="84.5" stroke="#969696"/><line x1="978" y1="74.5" x2="982" y2="74.5" stroke="#969696"/><line x1="978" y1="63.5" x2="982" y2="63.5" stroke="#969696"/><line x1="978" y1="53.5" x2="982" y2="53.5" stroke="#969696"/><line x1="978" y1="42.5" x2="982" y2="42.5" stroke="#969696"/><line x1="978" y1="32.5" x2="982" y2="32.5" stroke="#969696"/><line x1="978" y1="21.5" x2="982" y2="21.5" stroke="#969696"/><line x1="978" y1="11.5" x2="982" y2="11.5" stroke="#969696"/><line x1="978" y1="0.5" x2="982" y2="0.5" stroke="#969696"/><line x1="1019" y1="317.5" x2="1026" y2="317.5" stroke="#969696"/><line x1="1022" y1="306.5" x2="1026" y2="306.5" stroke="#969696"/><line x1="1022" y1="295.5" x2="1026" y2="295.5" stroke="#969696"/><line x1="1022" y1="283.5" x2="1026" y2="283.5" stroke="#969696"/><line x1="1022" y1="272.5" x2="1026" y2="272.5" stroke="#969696"/><line x1="1019" y1="260.5" x2="1026" y2="260.5" stroke="#969696"/><line x1="1022" y1="249.5" x2="1026" y2="249.5" stroke="#969696"/><line x1="1022" y1="238.5" x2="1026" y2="238.5" stroke="#969696"/><line x1="1022" y1="226.5" x2="1026" y2="226.5" stroke="#969696"/><line x1="1022" y1="215.5" x2="1026" y2="215.5" stroke="#969696"/><line x1="1019" y1="203.5" x2="1026" y2="203.5" stroke="#969696"/><line x1="1022" y1="192.5" x2="1026" y2="192.5" stroke="#969696"/><line x1="1022" y1="181.5" x2="1026" y2="181.5" stroke="#969696"/><line x1="1022" y1="169.5" x2="1026" y2="169.5" stroke="#969696"/><line x1="1022" y1="158.5" x2="1026" y2="158.5" stroke="#969696"/><line x1="1019" y1="146.5" x2="1026" y2="146.5" stroke="#969696"/><line x1="1022" y1="135.5" x2="1026" y2="135.5" stroke="#969696"/><line x1="1022" y1="124.5" x2="1026" y2="124.5" stroke="#969696"/><line x1="1022" y1="112.5" x2="1026" y2="112.5" stroke="#969696"/><line x1="1022" y1="101.5" x2="1026" y2="101.5" stroke="#969696"/><line x1="1019" y1="89.5" x2="1026" y2="89.5" stroke="#969696"/><line x1="1022" y1="78.5" x2="1026" y2="78.5" stroke="#969696"/><line x1="1022" y1="67.5" x2="1026" y2="67.5" stroke="#969696"/><line x1="1022" y1="55.5" x2="1026" y2="55.5" stroke="#969696"/><line x1="1022" y1="44.5" x2="1026" y2="44.5" stroke="#969696"/><line x1="1019" y1="32.5" x2="1026" y2="32.5" stroke="#969696"/><line x1="1022" y1="21.5" x2="1026" y2="21.5" stroke="#969696"/><line x1="1022" y1="10.5" x2="1026" y2="10.5" stroke="#969696"/></svg><svg width="1043" height="341" style="position:absolute;left:0;top:0"><clipPath id="cb"><rect x="0" y="0" width="982" height="321"/></clipPath><g clip-path="url(#cb)"><polyline points="0.0,140.1 0.3,140.1 0.5,140.1 0.8,140.1 1.0,140.1 1.3,140.1 1.6,140.1 2.0,140.1 2.5,140.1 7.4,140.1 15.6,140.1 26.1,140.1 37.6,140.1 49.2,140.1 59.7,140.1 67.9,140.1 72.8,140.1 73.3,140.1 73.7,140.1 74.0,140.1 74.2,140.1 74.5,140.1 74.7,140.1 75.0,140.1 75.3,140.1 75.8,140.1 76.2,140.1 76.7,140.1 77.2,140.1 77.8,140.1 78.3,140.0 78.8,140.0 79.3,140.0 79.8,140.0 80.3,139.9 80.8,139.9 81.3,139.9 81.8,139.8 82.3,139.8 82.8,139.8 83.3,139.7 83.8,139.6 84.3,139.6 84.8,139.5 85.3,139.4 85.8,139.4 86.3,139.3 86.8,139.2 87.3,139.1 87.8,139.0 88.3,138.9 88.8,138.8 89.3,138.7 89.8,138.6 90.3,138.5 90.8,138.4 91.3,138.3 91.8,138.2 92.3,138.1 92.8,138.0 93.3,137.9 93.8,137.8 94.3,137.7 94.8,137.5 95.3,137.4 95.8,137.3 96.3,137.1 96.8,136.9 97.3,136.8 97.8,136.6 98.3,136.4 98.8,136.3 99.3,136.1 99.8,135.9 100.3,135.8 100.8,135.6 101.3,135.4 101.8,135.2 102.3,135.1 102.8,134.9 103.3,134.7 103.8,134.5 104.3,134.3 104.8,134.1 105.3,133.9 105.8,133.7 106.3,133.5 106.8,133.3 107.3,133.1 107.8,132.9 108.3,132.6 108.8,132.4 109.3,132.2 109.8,131.9 110.3,131.7 110.8,131.4 111.3,131.2 111.8,130.9 112.3,130.7 112.8,130.4 113.3,130.2 113.8,129.9 114.3,129.6 114.8,129.4 115.3,129.1 115.8,128.8 116.3,128.5 116.8,128.3 117.3,128.0 117.8,127.7 118.3,127.4 118.8,127.1 119.3,126.8 119.8,126.5 120.3,126.2 120.8,125.9 121.3,125.6 121.8,125.3 122.3,124.9 122.8,124.6 123.3,124.3 123.8,124.0 124.3,123.6 124.8,123.3 125.3,123.0 125.8,122.6 126.3,122.3 126.8,122.0 127.3,121.6 127.8,121.2 128.3,120.9 128.8,120.5 129.3,120.1 129.8,119.7 130.3,119.4 130.8,119.0 131.3,118.6 131.8,118.2 132.3,117.8 132.8,117.4 133.3,117.0 133.8,116.6 134.3,116.2 134.8,115.8 135.3,115.4 135.8,115.0 136.3,114.6 136.8,114.1 137.3,113.7 137.8,113.3 138.3,112.9 138.8,112.4 139.3,112.0 139.8,111.6 140.3,111.1 140.8,110.7 141.3,110.2 141.8,109.8 142.3,109.3 142.8,108.9 143.3,108.4 143.8,107.9 144.3,107.4 144.8,107.0 145.3,106.5 145.8,106.0 146.3,105.5 146.8,105.0 147.3,104.5 147.8,104.0 148.3,103.5 148.8,103.1 149.3,102.6 149.8,102.1 150.3,101.7 150.8,101.2 151.3,100.7 151.8,100.2 152.3,99.7 152.8,99.2 153.3,98.8 153.8,98.3 154.3,97.8 154.8,97.3 155.3,96.8 155.8,96.3 156.3,95.8 156.8,95.3 157.3,94.8 157.8,94.4 158.3,93.9 158.8,93.4 159.3,92.9 159.8,92.4 160.3,91.9 160.8,91.4 161.3,91.0 161.8,90.5 162.3,90.0 162.8,89.5 163.3,89.0 163.8,88.5 164.3,88.0 164.8,87.5 165.3,87.0 165.8,86.6 166.3,86.1 166.8,85.6 167.3,85.1 167.8,84.6 168.3,84.1 168.8,83.7 169.3,83.2 169.8,82.7 170.3,82.3 170.8,81.8 171.3,81.3 171.8,80.8 172.3,80.3 172.8,79.8 173.3,79.4 173.8,78.9 174.3,78.4 174.8,77.9 175.3,77.4 175.8,76.9 176.3,76.4 176.8,75.9 177.3,75.5 177.8,75.0 178.3,74.5 178.8,74.0 179.3,73.5 179.8,73.0 180.3,72.5 180.8,72.0 181.3,71.5 181.8,71.1 182.3,70.6 182.8,70.1 183.3,69.6 183.8,69.1 184.3,68.6 184.8,68.1 185.3,67.6 185.8,67.2 186.3,66.7 186.8,66.2 187.3,65.7 187.8,65.2 188.3,64.7 188.8,64.3 189.3,63.8 189.8,63.3 190.3,62.9 190.8,62.4 191.3,61.9 191.8,61.4 192.3,60.9 192.8,60.4 193.3,60.0 193.8,59.5 194.3,59.0 194.8,58.5 195.3,58.0 195.8,57.5 196.3,57.0 196.8,56.5 197.3,56.1 197.8,55.6 198.3,55.1 198.8,54.6 199.3,54.1 199.8,53.6 200.3,53.1 200.8,52.6 201.3,52.1 201.8,51.7 202.3,51.2 202.8,50.7 203.3,50.2 203.8,49.7 204.3,49.2 204.8,48.7 205.3,48.2 205.8,47.8 206.3,47.3 206.8,46.8 207.3,46.3 207.8,45.8 208.3,45.3 208.8,44.9 209.3,44.4 209.8,43.9 210.3,43.5 210.8,43.0 211.3,42.5 211.8,42.0 212.3,41.5 212.8,41.0 213.3,40.6 213.8,40.1 214.3,39.6 214.8,39.1 215.3,38.6 215.8,38.1 216.3,37.6 216.8,37.1 217.2,36.7 217.7,36.2 218.2,35.7 218.7,35.2 219.3,34.7 220.0,34.1 220.7,33.4 221.5,32.8 222.2,32.1 223.0,31.5 223.8,30.9 224.6,30.4 225.3,30.0 225.8,29.8 226.3,29.6 226.8,29.5 227.2,29.4 227.7,29.4 228.2,29.3 228.7,29.3 229.3,29.2 230.2,29.1 231.1,29.0 232.2,28.9 233.2,28.8 234.3,28.8 235.3,28.8 236.3,28.9 237.1,29.2 237.7,29.5 238.3,29.9 238.8,30.3 239.3,30.7 239.8,31.3 240.2,31.8 240.7,32.5 241.1,33.2 241.8,34.7 242.4,36.5 243.0,38.7 243.6,40.9 244.0,43.1 244.5,45.2 244.8,47.0 245.1,48.3 245.2,48.7 245.3,49.0 245.3,49.3 245.4,49.5 245.4,49.8 245.4,50.0 245.5,50.3 245.6,50.8 245.9,52.4 246.3,54.7 246.9,57.4 247.5,60.3 248.0,63.2 248.6,65.9 249.0,68.2 249.3,69.8 249.4,70.3 249.5,70.6 249.5,70.9 249.6,71.2 249.6,71.5 249.7,71.7 249.7,72.0 249.8,72.3 249.9,72.6 249.9,72.9 250.0,73.1 250.0,73.4 250.1,73.7 250.1,74.0 250.2,74.3 250.3,74.8 250.6,76.5 251.1,79.0 251.6,81.9 252.2,85.0 252.8,88.2 253.3,91.1 253.8,93.6 254.1,95.3 254.2,95.8 254.3,96.1 254.3,96.4 254.4,96.7 254.5,97.0 254.5,97.2 254.6,97.5 254.6,97.8 254.6,98.1 254.7,98.3 254.7,98.6 254.8,98.9 254.8,99.1 254.8,99.4 254.9,99.8 255.0,100.3 255.4,103.2 256.1,107.8 256.9,113.5 257.8,119.8 258.7,126.0 259.5,131.7 260.2,136.3 260.6,139.2 260.7,139.7 260.7,140.1 260.7,140.4 260.7,140.7 260.7,141.0 260.7,141.2 260.8,141.5 261.0,141.7 261.4,142.0 261.9,142.4 262.5,142.7 263.2,143.0 263.9,143.2 264.6,143.3 265.3,143.4 265.8,143.3 266.2,143.1 266.5,142.7 266.8,142.3 267.1,141.7 267.3,141.2 267.6,140.8 267.9,140.4 268.2,140.1 268.5,140.0 268.7,139.9 269.0,139.9 269.3,140.0 269.6,140.0 269.9,140.0 270.3,140.1 270.7,140.1 271.9,140.1 273.6,140.1 275.4,140.1 277.4,140.1 279.4,140.1 281.2,140.1 282.9,140.1 284.1,140.1 284.5,140.1 284.8,140.2 285.2,140.2 285.4,140.3 285.7,140.3 286.0,140.3 286.3,140.2 286.6,140.1 287.4,139.6 288.4,138.8 289.4,137.9 290.4,136.7 291.5,135.4 292.5,134.1 293.6,132.7 294.5,131.3 295.6,129.5 296.7,127.4 297.7,125.3 298.8,123.1 299.7,120.8 300.7,118.4 301.6,116.1 302.5,113.8 303.4,111.3 304.1,108.4 304.8,105.5 305.5,102.5 306.2,99.8 307.0,97.5 307.9,95.7 308.9,94.6 309.5,94.4 310.1,94.3 310.8,94.3 311.5,94.4 312.2,94.6 312.8,94.8 313.3,95.1 313.7,95.4 313.9,95.6 314.0,95.8 314.0,96.1 314.1,96.4 314.1,96.7 314.1,97.0 314.1,97.4 314.2,97.9 314.5,99.6 315.0,101.9 315.5,104.8 316.1,107.8 316.7,110.8 317.2,113.7 317.7,116.0 318.0,117.7 318.1,118.2 318.2,118.5 318.2,118.8 318.3,119.1 318.3,119.4 318.4,119.6 318.4,119.9 318.5,120.2 318.6,120.5 318.6,120.8 318.7,121.0 318.7,121.3 318.7,121.6 318.8,121.9 318.9,122.2 318.9,122.7 319.2,124.2 319.6,126.3 320.0,128.7 320.5,131.3 321.0,134.0 321.4,136.4 321.8,138.5 322.1,140.0 322.1,140.5 322.1,140.9 322.2,141.2 322.2,141.6 322.2,141.9 322.3,142.1 322.3,142.3 322.5,142.5 322.7,142.6 322.9,142.7 323.2,142.7 323.5,142.7 323.8,142.6 324.1,142.6 324.5,142.5 325.0,142.5 327.2,142.5 330.4,142.5 334.2,142.5 338.5,142.5 342.7,142.5 346.5,142.5 349.7,142.5 351.9,142.5 352.3,142.5 352.7,142.6 353.0,142.6 353.3,142.7 353.5,142.7 353.8,142.7 354.1,142.7 354.4,142.5 355.6,141.3 357.0,139.3 358.5,136.6 360.2,133.5 361.8,130.1 363.4,126.6 365.0,123.2 366.4,120.2 367.7,117.4 368.9,114.7 370.2,112.0 371.3,109.3 372.5,106.5 373.6,103.7 374.8,100.8 376.0,97.8 377.4,94.2 378.8,90.4 380.2,86.4 381.7,82.4 383.1,78.5 384.5,74.6 385.8,70.9 387.2,67.5 388.2,65.0 389.2,62.5 390.2,60.2 391.2,57.9 392.2,55.7 393.2,53.6 394.2,51.7 395.2,49.9 395.9,48.7 396.6,47.6 397.3,46.5 398.0,45.5 398.7,44.5 399.4,43.7 400.1,43.1 400.7,42.7 401.0,42.6 401.3,42.5 401.5,42.5 401.7,42.5 402.0,42.6 402.3,42.6 402.7,42.7 403.2,42.7 408.6,42.7 417.9,42.7 429.8,42.7 443.0,42.7 456.2,42.7 468.1,42.7 477.4,42.7 482.8,42.7 483.3,42.7 483.7,42.6 484.0,42.6 484.3,42.5 484.6,42.5 484.8,42.5 485.0,42.6 485.3,42.7 485.8,43.2 486.3,43.9 486.8,44.9 487.2,46.0 487.6,47.1 488.0,48.1 488.3,49.1 488.5,49.9 488.6,50.2 488.7,50.5 488.7,50.8 488.7,51.0 488.8,51.3 488.8,51.6 488.9,51.9 488.9,52.4 489.3,54.5 489.9,57.8 490.6,61.6 491.3,65.9 492.0,70.1 492.7,73.9 493.3,77.2 493.7,79.3 493.7,79.8 493.8,80.1 493.9,80.5 493.9,80.7 494.0,81.0 494.0,81.2 494.0,81.5 494.1,81.8 494.1,82.1 494.2,82.3 494.2,82.6 494.3,82.8 494.3,83.1 494.4,83.4 494.4,83.8 494.5,84.3 495.2,88.2 496.3,94.8 497.7,103.0 499.3,112.1 500.9,121.3 502.3,129.5 503.4,136.1 504.1,140.0 504.1,140.5 504.2,140.9 504.2,141.3 504.2,141.6 504.2,141.9 504.3,142.1 504.4,142.3 504.5,142.5 504.7,142.6 504.9,142.7 505.2,142.7 505.5,142.7 505.8,142.6 506.2,142.6 506.6,142.5 507.0,142.5 508.9,142.5 511.5,142.5 514.6,142.5 518.0,142.5 521.5,142.5 524.6,142.5 527.2,142.5 529.1,142.5 529.5,142.5 529.9,142.6 530.3,142.6 530.6,142.6 530.8,142.7 531.1,142.7 531.4,142.6 531.6,142.5 531.9,142.3 532.1,142.0 532.2,141.6 532.4,141.1 532.6,140.7 532.7,140.3 532.9,140.0 533.2,139.8 533.4,139.7 533.7,139.6 533.9,139.6 534.2,139.7 534.5,139.7 534.8,139.7 535.2,139.8 535.7,139.8 538.6,139.8 543.1,139.8 548.6,139.8 554.6,139.8 560.6,139.8 566.1,139.8 570.6,139.8 573.5,139.8 574.0,139.8 574.3,139.8 574.7,139.8 574.9,139.8 575.2,139.8 575.4,139.8 575.7,139.8 576.0,139.8 576.3,139.8 576.5,139.8 576.8,139.8 577.0,139.8 577.3,139.8 577.6,139.8 578.0,139.8 578.5,139.8 585.1,139.8 596.8,139.8 612.0,139.8 628.9,139.8 645.8,139.8 661.0,139.8 672.7,139.8 679.3,139.8 679.8,139.8 680.2,139.8 680.5,139.8 680.7,139.8 681.0,139.8 681.2,139.8 681.5,139.8 681.8,139.8 682.3,139.8 682.7,139.8 683.2,139.8 683.7,139.8 684.3,139.8 684.8,139.7 685.3,139.7 685.8,139.7 686.3,139.7 686.8,139.6 687.3,139.6 687.8,139.6 688.3,139.5 688.8,139.5 689.3,139.5 689.8,139.4 690.3,139.3 690.8,139.3 691.3,139.2 691.8,139.1 692.3,139.1 692.8,139.0 693.3,138.9 693.8,138.8 694.3,138.7 694.8,138.6 695.3,138.5 695.8,138.4 696.3,138.3 696.8,138.2 697.3,138.1 697.8,138.0 698.3,137.9 698.8,137.8 699.3,137.7 699.8,137.6 700.3,137.5 700.8,137.4 701.3,137.2 701.8,137.1 702.3,137.0 702.8,136.8 703.3,136.6 703.8,136.5 704.3,136.3 704.8,136.1 705.3,136.0 705.8,135.8 706.3,135.6 706.8,135.5 707.3,135.3 707.8,135.1 708.3,134.9 708.8,134.8 709.3,134.6 709.8,134.4 710.3,134.2 710.8,134.0 711.3,133.8 711.8,133.6 712.3,133.4 712.8,133.2 713.3,133.0 713.8,132.8 714.3,132.6 714.8,132.3 715.3,132.1 715.8,131.9 716.3,131.6 716.8,131.4 717.3,131.1 717.8,130.9 718.3,130.6 718.8,130.4 719.3,130.1 719.8,129.9 720.3,129.6 720.8,129.3 721.3,129.1 721.8,128.8 722.3,128.5 722.8,128.2 723.3,128.0 723.8,127.7 724.3,127.4 724.8,127.1 725.3,126.8 725.8,126.5 726.3,126.2 726.8,125.9 727.3,125.6 727.8,125.3 728.3,125.0 728.8,124.6 729.3,124.3 729.8,124.0 730.3,123.7 730.8,123.3 731.3,123.0 731.8,122.7 732.3,122.3 732.8,122.0 733.3,121.7 733.8,121.3 734.3,120.9 734.8,120.6 735.3,120.2 735.8,119.8 736.3,119.4 736.8,119.1 737.3,118.7 737.8,118.3 738.3,117.9 738.8,117.5 739.3,117.1 739.8,116.7 740.3,116.3 740.8,115.9 741.3,115.5 741.8,115.1 742.3,114.7 742.8,114.3 743.3,113.8 743.8,113.4 744.3,113.0 744.8,112.6 745.3,112.1 745.8,111.7 746.3,111.3 746.8,110.8 747.3,110.4 747.8,109.9 748.3,109.5 748.8,109.0 749.3,108.6 749.8,108.1 750.3,107.6 750.8,107.1 751.3,106.7 751.8,106.2 752.3,105.7 752.8,105.2 753.3,104.7 753.8,104.2 754.3,103.7 754.8,103.2 755.3,102.8 755.8,102.3 756.3,101.8 756.8,101.4 757.3,100.9 757.8,100.4 758.3,99.9 758.8,99.4 759.3,98.9 759.8,98.5 760.3,98.0 760.8,97.5 761.3,97.0 761.8,96.5 762.3,96.0 762.8,95.5 763.3,95.0 763.8,94.5 764.3,94.1 764.8,93.6 765.3,93.1 765.8,92.6 766.3,92.1 766.8,91.6 767.3,91.1 767.8,90.7 768.3,90.2 768.8,89.7 769.3,89.2 769.8,88.7 770.3,88.2 770.8,87.7 771.3,87.2 771.8,86.7 772.3,86.3 772.8,85.8 773.3,85.3 773.8,84.8 774.3,84.3 774.8,83.8 775.3,83.4 775.8,82.9 776.3,82.4 776.8,82.0 777.3,81.5 777.8,81.0 778.3,80.5 778.8,80.0 779.3,79.5 779.8,79.1 780.3,78.6 780.8,78.1 781.3,77.6 781.8,77.1 782.3,76.6 782.8,76.1 783.3,75.6 783.8,75.2 784.3,74.7 784.8,74.2 785.3,73.7 785.8,73.2 786.3,72.7 786.8,72.2 787.3,71.7 787.8,71.2 788.3,70.8 788.8,70.3 789.3,69.8 789.8,69.3 790.3,68.8 790.8,68.3 791.3,67.8 791.8,67.3 792.3,66.9 792.8,66.4 793.3,65.9 793.8,65.4 794.3,64.9 794.8,64.4 795.3,64.0 795.8,63.5 796.3,63.0 796.8,62.6 797.3,62.1 797.8,61.6 798.3,61.1 798.8,60.6 799.3,60.1 799.8,59.7 800.3,59.2 800.8,58.7 801.3,58.2 801.8,57.7 802.3,57.2 802.8,56.7 803.3,56.2 803.8,55.8 804.3,55.3 804.8,54.8 805.3,54.3 805.8,53.8 806.3,53.3 806.8,52.8 807.3,52.3 807.8,51.9 808.3,51.4 808.8,50.9 809.3,50.4 809.8,49.9 810.3,49.4 810.8,48.9 811.3,48.4 811.8,47.9 812.3,47.5 812.8,47.0 813.3,46.5 813.8,46.0 814.3,45.5 814.8,45.0 815.3,44.6 815.8,44.1 816.3,43.6 816.8,43.2 817.3,42.7 817.8,42.2 818.3,41.7 818.8,41.2 819.3,40.7 819.8,40.3 820.3,39.8 820.8,39.3 821.3,38.8 821.8,38.3 822.3,37.8 822.8,37.3 823.3,36.8 823.7,36.4 824.2,35.9 824.7,35.4 825.2,34.9 825.8,34.4 826.5,33.8 827.2,33.1 828.0,32.5 828.7,31.8 829.5,31.2 830.3,30.6 831.1,30.1 831.8,29.7 832.3,29.5 832.8,29.3 833.2,29.2 833.7,29.1 834.2,29.0 834.7,29.0 835.2,28.9 835.8,28.9 836.8,28.8 838.0,28.7 839.4,28.6 840.7,28.6 842.1,28.6 843.3,28.7 844.5,28.9 845.4,29.2 846.0,29.5 846.4,29.9 846.9,30.3 847.2,30.8 847.6,31.3 847.9,31.9 848.3,32.5 848.6,33.2 849.2,34.7 849.8,36.5 850.4,38.7 851.0,40.9 851.5,43.1 851.9,45.2 852.3,47.0 852.6,48.3 852.7,48.7 852.7,49.0 852.8,49.3 852.8,49.5 852.9,49.7 852.9,50.0 853.0,50.3 853.1,50.8 853.4,52.8 854.0,55.9 854.7,59.5 855.4,63.5 856.1,67.4 856.8,71.0 857.4,74.1 857.7,76.1 857.8,76.6 857.9,76.9 858.0,77.3 858.0,77.5 858.1,77.8 858.1,78.0 858.1,78.3 858.2,78.6 858.3,78.9 858.3,79.2 858.3,79.4 858.4,79.7 858.4,80.0 858.5,80.3 858.5,80.6 858.6,81.1 858.9,83.0 859.4,85.9 860.0,89.3 860.6,93.0 861.2,96.7 861.8,100.1 862.3,103.0 862.6,104.9 862.7,105.4 862.7,105.7 862.8,106.0 862.8,106.3 862.9,106.6 862.9,106.8 863.0,107.1 863.0,107.4 863.0,107.7 863.1,108.0 863.1,108.2 863.2,108.5 863.2,108.7 863.3,109.1 863.3,109.4 863.4,109.9 863.8,112.3 864.3,115.9 865.0,120.3 865.8,125.1 866.5,129.9 867.2,134.3 867.7,137.9 868.1,140.3 868.2,140.8 868.2,141.2 868.2,141.5 868.2,141.8 868.2,142.1 868.2,142.4 868.3,142.6 868.5,142.8 868.9,143.1 869.5,143.3 870.3,143.5 871.1,143.6 872.0,143.6 872.8,143.6 873.5,143.5 874.1,143.3 874.5,143.0 874.8,142.6 875.1,142.1 875.4,141.5 875.6,141.0 875.9,140.5 876.2,140.1 876.5,139.8 876.8,139.7 877.0,139.6 877.3,139.6 877.6,139.7 877.9,139.7 878.2,139.7 878.6,139.8 879.0,139.8 880.2,139.8 881.7,139.8 883.4,139.8 885.3,139.8 887.2,139.8 888.9,139.8 890.4,139.8 891.6,139.8 892.0,139.8 892.3,139.9 892.6,139.9 892.9,140.0 893.2,140.0 893.5,140.0 893.8,139.9 894.1,139.8 894.9,139.3 895.9,138.6 896.9,137.7 898.0,136.6 899.1,135.4 900.1,134.1 901.2,132.7 902.1,131.3 903.2,129.3 904.3,127.1 905.3,124.7 906.3,122.2 907.3,119.6 908.2,117.1 909.1,114.5 910.0,112.1 910.8,109.7 911.6,107.1 912.3,104.4 913.1,101.8 913.8,99.4 914.6,97.3 915.5,95.6 916.4,94.6 916.9,94.3 917.4,94.1 917.9,94.1 918.5,94.0 919.0,94.1 919.5,94.2 920.0,94.4 920.4,94.6 920.8,95.0 921.2,95.5 921.6,96.1 921.9,96.8 922.2,97.5 922.4,98.2 922.6,98.8 922.8,99.4 922.9,99.7 923.0,100.0 923.0,100.2 923.0,100.5 923.0,100.8 923.1,101.1 923.1,101.4 923.2,101.9 923.6,104.8 924.3,109.3 925.1,114.9 926.0,121.0 926.9,127.0 927.7,132.6 928.4,137.1 928.8,140.0 928.9,140.5 928.9,140.9 928.9,141.3 928.9,141.6 928.9,141.9 929.0,142.1 929.1,142.3 929.2,142.5 929.4,142.6 929.6,142.7 929.9,142.7 930.2,142.7 930.5,142.6 930.8,142.6 931.2,142.5 931.7,142.5 933.9,142.5 937.1,142.5 940.9,142.5 945.2,142.5 949.4,142.5 953.2,142.5 956.4,142.5 958.6,142.5 959.0,142.5 959.4,142.6 959.7,142.6 960.0,142.7 960.3,142.7 960.5,142.7 960.8,142.6 961.1,142.5 961.8,141.9 962.6,140.9 963.3,139.7 964.1,138.2 964.9,136.6 965.7,134.9 966.6,133.1 967.5,131.3 969.1,128.0 970.9,124.2 972.9,120.0 974.9,115.6 976.9,111.2 978.7,107.1 980.4,103.3 981.8,100.2 982.4,98.8 983.0,97.5 983.6,96.4 984.1,95.3 984.5,94.2 985.0,93.2 985.5,92.1 986.0,91.0" fill="none" stroke="#ff7f50" stroke-width="1.9" stroke-linejoin="round"/><polyline points="0.0,287.8 0.3,287.8 0.5,287.8 0.8,287.8 1.0,287.8 1.3,287.8 1.6,287.8 2.0,287.8 2.5,287.8 7.4,287.8 15.6,287.8 26.1,287.8 37.8,287.8 49.5,287.8 60.0,287.8 68.2,287.8 73.1,287.8 73.6,287.8 73.9,287.8 74.2,287.8 74.4,287.9 74.7,287.9 74.9,287.9 75.2,287.8 75.6,287.8 76.8,287.6 78.3,287.3 80.1,286.9 82.0,286.5 84.0,286.0 86.0,285.4 88.0,284.9 89.9,284.3 91.9,283.7 93.9,283.1 95.9,282.4 97.9,281.8 99.9,281.0 101.9,280.3 103.9,279.5 105.9,278.7 107.9,277.8 109.9,276.9 111.9,275.9 113.9,274.9 115.9,273.9 117.9,272.8 119.8,271.7 121.8,270.6 123.8,269.4 125.8,268.2 127.9,266.9 129.9,265.6 131.9,264.3 133.9,262.9 135.8,261.5 137.8,260.1 139.8,258.5 141.9,256.9 143.9,255.3 145.9,253.6 147.9,251.8 149.8,250.1 151.8,248.3 153.8,246.6 155.8,244.8 157.8,243.1 159.8,241.3 161.8,239.4 163.7,237.6 165.7,235.8 167.7,234.0 169.7,232.2 171.7,230.4 173.7,228.6 175.7,226.8 177.7,225.0 179.7,223.2 181.7,221.4 183.7,219.6 185.7,217.8 187.7,216.0 189.8,214.2 191.9,212.3 194.0,210.5 196.1,208.7 198.0,206.9 199.9,205.2 201.6,203.5 202.8,202.3 203.8,201.2 204.8,200.1 205.8,199.0 206.8,198.0 207.7,196.9 208.6,195.8 209.6,194.7 210.6,193.5 211.6,192.3 212.7,191.1 213.7,189.9 214.7,188.7 215.7,187.5 216.7,186.3 217.6,185.1 218.5,183.9 219.3,182.7 220.1,181.4 220.9,180.2 221.7,179.0 222.5,177.9 223.2,176.9 224.0,176.0 224.5,175.5 225.0,175.1 225.4,174.7 225.9,174.3 226.3,174.0 226.8,173.7 227.4,173.4 228.0,173.2 229.1,172.9 230.4,172.7 231.8,172.5 233.3,172.4 234.8,172.4 236.2,172.5 237.4,172.8 238.3,173.2 238.8,173.7 239.3,174.3 239.6,175.0 239.9,175.8 240.2,176.6 240.4,177.4 240.5,178.1 240.7,178.7 240.8,179.0 240.9,179.3 240.9,179.6 240.9,179.8 241.0,180.1 241.0,180.4 241.0,180.7 241.1,181.2 241.5,183.4 242.0,186.6 242.6,190.5 243.4,194.7 244.1,198.9 244.7,202.8 245.2,206.0 245.6,208.2 245.7,208.7 245.7,209.0 245.8,209.4 245.8,209.6 245.9,209.9 245.9,210.1 245.9,210.4 246.0,210.7 246.1,211.0 246.1,211.2 246.1,211.5 246.2,211.7 246.2,212.0 246.3,212.3 246.4,212.7 246.5,213.2 247.5,218.2 249.1,226.9 251.3,237.9 253.7,250.2 256.0,262.5 258.2,273.5 259.8,282.2 260.8,287.2 260.9,287.7 260.9,288.1 260.9,288.5 261.0,288.8 261.0,289.0 261.0,289.2 261.1,289.5 261.3,289.7 261.7,290.1 262.2,290.4 262.9,290.7 263.6,291.0 264.4,291.3 265.1,291.4 265.8,291.5 266.4,291.4 266.9,291.2 267.3,290.8 267.8,290.3 268.2,289.8 268.6,289.2 269.0,288.7 269.4,288.3 269.8,288.0 270.1,287.9 270.4,287.9 270.7,287.8 270.9,287.9 271.2,287.9 271.5,288.0 271.9,288.0 272.3,288.0 273.4,288.0 274.9,288.0 276.6,288.0 278.4,288.0 280.1,288.0 281.8,288.0 283.3,288.0 284.4,288.0 284.8,288.0 285.1,288.1 285.4,288.1 285.7,288.2 286.0,288.2 286.3,288.2 286.6,288.1 286.9,288.0 287.8,287.5 288.8,286.6 289.9,285.5 291.0,284.2 292.2,282.8 293.3,281.2 294.4,279.5 295.5,277.8 297.0,274.7 298.4,271.0 299.8,266.8 301.2,262.4 302.5,258.2 303.8,254.3 305.2,251.0 306.6,248.7 307.2,247.9 307.9,247.2 308.6,246.6 309.3,246.1 309.9,245.7 310.6,245.4 311.2,245.3 311.7,245.3 312.1,245.5 312.5,245.8 312.9,246.2 313.2,246.7 313.6,247.2 313.8,247.7 314.1,248.2 314.3,248.7 314.4,249.0 314.5,249.3 314.5,249.5 314.6,249.8 314.6,250.0 314.6,250.3 314.7,250.7 314.8,251.2 315.3,253.9 316.1,258.2 317.1,263.4 318.1,269.2 319.2,275.0 320.2,280.2 321.0,284.5 321.5,287.2 321.6,287.7 321.6,288.1 321.7,288.5 321.7,288.8 321.7,289.1 321.8,289.3 321.8,289.5 322.0,289.7 322.2,289.8 322.4,289.9 322.7,289.9 323.0,289.9 323.3,289.8 323.6,289.8 324.0,289.8 324.5,289.8 326.7,289.8 330.0,289.9 333.9,290.0 338.2,290.2 342.6,290.3 346.5,290.4 349.8,290.5 352.0,290.5 352.4,290.6 352.8,290.6 353.1,290.7 353.4,290.8 353.6,290.8 353.9,290.8 354.2,290.7 354.5,290.6 355.5,289.8 356.6,288.6 357.7,286.9 359.0,285.0 360.2,282.8 361.5,280.5 362.7,278.2 363.9,276.0 365.4,273.0 367.0,269.8 368.5,266.5 370.1,263.0 371.6,259.4 373.1,255.8 374.6,252.2 376.0,248.7 377.4,245.3 378.7,241.8 380.0,238.2 381.3,234.7 382.5,231.2 383.8,227.8 385.0,224.5 386.3,221.3 387.4,218.6 388.4,215.9 389.4,213.3 390.5,210.7 391.5,208.2 392.6,205.8 393.7,203.6 394.8,201.6 395.6,200.2 396.5,198.9 397.4,197.6 398.3,196.3 399.2,195.2 400.1,194.3 400.9,193.6 401.7,193.1 402.0,193.0 402.3,192.9 402.5,192.9 402.8,192.9 403.0,193.0 403.3,193.0 403.7,193.1 404.2,193.1 409.5,193.1 418.6,193.1 430.2,193.1 443.1,193.1 456.1,193.1 467.7,193.1 476.8,193.1 482.1,193.1 482.6,193.1 483.0,193.0 483.3,193.0 483.6,192.9 483.8,192.9 484.1,192.9 484.3,193.0 484.6,193.1 485.1,193.6 485.7,194.4 486.2,195.4 486.7,196.6 487.1,197.8 487.5,198.9 487.8,200.0 488.1,200.8 488.2,201.1 488.3,201.4 488.3,201.7 488.3,201.9 488.4,202.1 488.4,202.4 488.5,202.8 488.5,203.3 489.6,208.9 491.4,218.7 493.7,231.3 496.2,245.2 498.7,259.2 501.0,271.8 502.8,281.6 503.9,287.2 503.9,287.7 504.0,288.2 504.0,288.5 504.0,288.8 504.0,289.1 504.1,289.3 504.2,289.5 504.3,289.7 504.5,289.8 504.7,289.9 505.0,289.9 505.3,289.9 505.6,289.9 506.0,289.8 506.4,289.8 506.8,289.8 508.6,289.8 511.0,289.9 514.0,290.0 517.1,290.1 520.3,290.3 523.3,290.4 525.7,290.5 527.5,290.5 527.9,290.5 528.3,290.6 528.6,290.6 528.9,290.7 529.2,290.7 529.5,290.7 529.7,290.7 530.0,290.6 530.3,290.4 530.7,290.1 531.0,289.7 531.2,289.3 531.5,288.9 531.8,288.5 532.2,288.2 532.5,288.0 532.8,287.9 533.0,287.9 533.3,287.9 533.5,287.9 533.8,287.9 534.2,288.0 534.5,288.0 535.0,288.0 537.9,288.0 542.5,288.0 548.1,288.0 554.2,288.0 560.4,288.0 566.0,288.0 570.6,288.0 573.5,288.0 574.0,288.0 574.3,288.0 574.7,288.0 574.9,288.0 575.2,288.0 575.4,288.0 575.7,288.0 576.0,288.0 576.3,288.0 576.5,288.0 576.8,288.0 577.0,288.0 577.3,288.0 577.6,288.0 578.0,288.0 578.5,288.0 585.1,287.9 596.9,287.9 612.1,287.8 629.0,287.7 646.0,287.5 661.2,287.4 673.0,287.4 679.6,287.3 680.1,287.3 680.4,287.3 680.7,287.3 681.0,287.4 681.2,287.4 681.4,287.4 681.7,287.3 682.1,287.3 683.3,287.1 684.8,286.8 686.6,286.4 688.5,286.0 690.5,285.4 692.5,284.9 694.5,284.4 696.4,283.8 698.4,283.2 700.4,282.6 702.4,281.9 704.4,281.3 706.4,280.5 708.4,279.8 710.4,279.0 712.4,278.2 714.4,277.3 716.4,276.4 718.4,275.4 720.4,274.4 722.4,273.4 724.4,272.3 726.3,271.2 728.3,270.1 730.3,268.9 732.3,267.7 734.4,266.4 736.4,265.1 738.4,263.8 740.4,262.4 742.3,261.0 744.3,259.6 746.3,258.0 748.4,256.4 750.4,254.8 752.4,253.1 754.4,251.3 756.3,249.6 758.3,247.8 760.3,246.1 762.3,244.3 764.3,242.6 766.3,240.8 768.3,238.9 770.2,237.1 772.2,235.3 774.2,233.5 776.2,231.7 778.2,229.9 780.2,228.1 782.2,226.3 784.2,224.5 786.2,222.7 788.2,220.9 790.2,219.1 792.2,217.3 794.2,215.5 796.3,213.7 798.4,211.8 800.5,210.0 802.6,208.2 804.5,206.4 806.4,204.7 808.1,203.0 809.3,201.8 810.3,200.7 811.3,199.6 812.3,198.5 813.3,197.5 814.2,196.4 815.1,195.3 816.1,194.2 817.1,193.0 818.1,191.8 819.2,190.6 820.2,189.4 821.2,188.2 822.2,187.0 823.2,185.8 824.1,184.6 825.0,183.4 825.8,182.2 826.6,180.9 827.4,179.7 828.2,178.5 829.0,177.4 829.7,176.4 830.5,175.5 831.0,175.0 831.5,174.6 831.9,174.2 832.3,173.8 832.8,173.5 833.3,173.2 833.9,172.9 834.5,172.7 835.6,172.4 837.0,172.1 838.4,171.9 840.0,171.7 841.5,171.7 843.0,171.8 844.3,172.0 845.3,172.5 846.0,173.1 846.6,174.0 847.1,175.0 847.6,176.1 847.9,177.3 848.2,178.4 848.5,179.4 848.7,180.2 848.8,180.5 848.9,180.8 848.9,181.1 848.9,181.3 849.0,181.5 849.0,181.8 849.1,182.2 849.1,182.7 850.4,189.4 852.5,201.6 855.4,217.4 858.5,235.0 861.6,252.5 864.5,268.3 866.6,280.5 867.9,287.2 867.9,287.7 868.0,288.1 868.0,288.5 868.0,288.8 868.0,289.0 868.0,289.3 868.1,289.5 868.3,289.7 868.7,290.0 869.3,290.3 869.9,290.6 870.7,290.8 871.4,291.0 872.2,291.1 872.9,291.1 873.5,291.0 874.0,290.8 874.4,290.5 874.9,290.0 875.3,289.5 875.7,289.0 876.1,288.6 876.5,288.2 876.9,288.0 877.2,287.9 877.5,287.9 877.8,287.9 878.0,287.9 878.3,287.9 878.6,288.0 879.0,288.0 879.4,288.0 880.5,288.0 882.0,288.0 883.7,288.0 885.5,288.0 887.2,288.0 888.9,288.0 890.4,288.0 891.5,288.0 891.9,288.0 892.2,288.1 892.5,288.1 892.8,288.2 893.1,288.2 893.4,288.2 893.7,288.1 894.0,288.0 895.0,287.4 896.2,286.4 897.5,285.1 898.8,283.5 900.2,281.8 901.7,279.9 903.0,278.0 904.3,276.0 906.1,272.5 908.0,267.9 909.8,262.8 911.6,257.6 913.3,252.8 914.9,248.7 916.5,245.7 917.9,244.4 918.4,244.4 918.9,244.5 919.4,244.8 919.8,245.2 920.3,245.6 920.7,246.1 921.0,246.5 921.3,246.9 921.4,247.2 921.5,247.4 921.6,247.7 921.6,247.9 921.6,248.2 921.7,248.5 921.7,248.9 921.8,249.4 922.4,252.2 923.3,256.7 924.4,262.2 925.6,268.3 926.8,274.4 927.9,279.9 928.8,284.4 929.4,287.2 929.5,287.7 929.5,288.1 929.5,288.5 929.6,288.8 929.6,289.1 929.6,289.3 929.7,289.5 929.9,289.7 930.1,289.8 930.3,289.9 930.6,289.9 930.9,289.9 931.2,289.8 931.5,289.8 931.9,289.8 932.4,289.8 934.6,289.8 937.7,289.9 941.5,290.0 945.7,290.1 949.9,290.2 953.7,290.3 956.8,290.4 959.0,290.4 959.4,290.5 959.8,290.5 960.1,290.6 960.4,290.7 960.6,290.7 960.9,290.7 961.2,290.6 961.5,290.5 962.3,289.9 963.2,289.0 964.2,287.7 965.1,286.3 966.1,284.7 967.2,282.9 968.2,281.2 969.2,279.4 970.8,276.5 972.5,273.1 974.2,269.4 976.0,265.6 977.7,261.8 979.3,258.1 980.7,254.8 982.0,252.0 982.6,250.6 983.2,249.4 983.7,248.3 984.2,247.2 984.6,246.2 985.1,245.1 985.5,244.1 986.0,243.0" fill="none" stroke="#ffffff" stroke-width="1.9" stroke-linejoin="round"/></g><line x1="39" y1="50.80000000000001" x2="61" y2="50.80000000000001" stroke="#aaa6b6" stroke-width="2"/><line x1="39" y1="74" x2="61" y2="74" stroke="#1f5b7c" stroke-width="2"/><line x1="39" y1="96.70000000000005" x2="61" y2="96.70000000000005" stroke="#ffffff" stroke-width="2"/><line x1="39" y1="119.79999999999995" x2="61" y2="119.79999999999995" stroke="#ff7f50" stroke-width="2"/></svg></div><div style="position:absolute;left:-96.25px;width:600px;text-align:center;top:428.84px;font:normal normal 12px/12px 'Liberation Sans', sans-serif;color:#969696;letter-spacing:0px;white-space:pre;transform:scaleX(1.135);transform-origin:center top;">18:49:10</div><div style="position:absolute;left:-96.25px;width:600px;text-align:center;top:775.84px;font:normal normal 12px/12px 'Liberation Sans', sans-serif;color:#969696;letter-spacing:0px;white-space:pre;transform:scaleX(1.135);transform-origin:center top;">18:49:10</div><div style="position:absolute;left:72.5px;width:600px;text-align:center;top:428.84px;font:normal normal 12px/12px 'Liberation Sans', sans-serif;color:#969696;letter-spacing:0px;white-space:pre;transform:scaleX(1.135);transform-origin:center top;">18:49:20</div><div style="position:absolute;left:72.5px;width:600px;text-align:center;top:775.84px;font:normal normal 12px/12px 'Liberation Sans', sans-serif;color:#969696;letter-spacing:0px;white-space:pre;transform:scaleX(1.135);transform-origin:center top;">18:49:20</div><div style="position:absolute;left:241.25px;width:600px;text-align:center;top:428.84px;font:normal normal 12px/12px 'Liberation Sans', sans-serif;color:#969696;letter-spacing:0px;white-space:pre;transform:scaleX(1.135);transform-origin:center top;">18:49:30</div><div style="position:absolute;left:241.25px;width:600px;text-align:center;top:775.84px;font:normal normal 12px/12px 'Liberation Sans', sans-serif;color:#969696;letter-spacing:0px;white-space:pre;transform:scaleX(1.135);transform-origin:center top;">18:49:30</div><div style="position:absolute;left:410.0px;width:600px;text-align:center;top:428.84px;font:normal normal 12px/12px 'Liberation Sans', sans-serif;color:#969696;letter-spacing:0px;white-space:pre;transform:scaleX(1.135);transform-origin:center top;">18:49:40</div><div style="position:absolute;left:410.0px;width:600px;text-align:center;top:775.84px;font:normal normal 12px/12px 'Liberation Sans', sans-serif;color:#969696;letter-spacing:0px;white-space:pre;transform:scaleX(1.135);transform-origin:center top;">18:49:40</div><div style="position:absolute;left:578.75px;width:600px;text-align:center;top:428.84px;font:normal normal 12px/12px 'Liberation Sans', sans-serif;color:#969696;letter-spacing:0px;white-space:pre;transform:scaleX(1.135);transform-origin:center top;">18:49:50</div><div style="position:absolute;left:578.75px;width:600px;text-align:center;top:775.84px;font:normal normal 12px/12px 'Liberation Sans', sans-serif;color:#969696;letter-spacing:0px;white-space:pre;transform:scaleX(1.135);transform-origin:center top;">18:49:50</div><div style="position:absolute;right:353.5px;top:112.84px;font:normal normal 12px/12px 'Liberation Sans', sans-serif;color:#b4b4b4;letter-spacing:0px;white-space:pre;transform:scaleX(1.135);transform-origin:right top;">18:49:58</div><div style="position:absolute;left:1033px;top:112.84px;font:normal normal 12px/12px 'Liberation Sans', sans-serif;color:#969696;letter-spacing:0px;white-space:pre;transform:scaleX(1.14);transform-origin:left top;">1.5</div><div style="position:absolute;left:1032.5px;top:163.44px;font:normal normal 12px/12px 'Liberation Sans', sans-serif;color:#969696;letter-spacing:0px;white-space:pre;transform:scaleX(1.14);transform-origin:left top;">1</div><div style="position:absolute;left:1032.5px;top:213.79px;font:normal normal 12px/12px 'Liberation Sans', sans-serif;color:#969696;letter-spacing:0px;white-space:pre;transform:scaleX(1.14);transform-origin:left top;">0.5</div><div style="position:absolute;left:1032.5px;top:264.14px;font:normal normal 12px/12px 'Liberation Sans', sans-serif;color:#969696;letter-spacing:0px;white-space:pre;transform:scaleX(1.14);transform-origin:left top;">0</div><div style="position:absolute;left:1032.5px;top:314.49px;font:normal normal 12px/12px 'Liberation Sans', sans-serif;color:#969696;letter-spacing:0px;white-space:pre;transform:scaleX(1.14);transform-origin:left top;">-0.5</div><div style="position:absolute;left:1032.5px;top:364.84px;font:normal normal 12px/12px 'Liberation Sans', sans-serif;color:#969696;letter-spacing:0px;white-space:pre;transform:scaleX(1.14);transform-origin:left top;">-1</div><div style="position:absolute;left:1032.5px;top:415.19px;font:normal normal 12px/12px 'Liberation Sans', sans-serif;color:#969696;letter-spacing:0px;white-space:pre;transform:scaleX(1.14);transform-origin:left top;">-1.5</div><div style="position:absolute;left:83px;top:150.84px;font:normal normal 12px/12px 'Liberation Sans', sans-serif;color:#8c8c8c;letter-spacing:0px;white-space:pre;transform:scaleX(1.097);transform-origin:left top;">dB w.r.t. Ref.</div><div style="position:absolute;left:83px;top:173.84px;font:normal normal 12px/12px 'Liberation Sans', sans-serif;color:#8c8c8c;letter-spacing:0px;white-space:pre;transform:scaleX(1.097);transform-origin:left top;">dB w.r.t. Meas.</div><div style="position:absolute;left:83px;top:497.84px;font:normal normal 12px/12px 'Liberation Sans', sans-serif;color:#8c8c8c;letter-spacing:0px;white-space:pre;transform:scaleX(1.1);transform-origin:left top;">Measured I</div><div style="position:absolute;left:83px;top:520.84px;font:normal normal 12px/12px 'Liberation Sans', sans-serif;color:#8c8c8c;letter-spacing:0px;white-space:pre;transform:scaleX(1.1);transform-origin:left top;">Measured B</div><div style="position:absolute;left:83px;top:543.84px;font:normal normal 12px/12px 'Liberation Sans', sans-serif;color:#8c8c8c;letter-spacing:0px;white-space:pre;transform:scaleX(1.1);transform-origin:left top;">Programmed I</div><div style="position:absolute;left:83px;top:566.84px;font:normal normal 12px/12px 'Liberation Sans', sans-serif;color:#8c8c8c;letter-spacing:0px;white-space:pre;transform:scaleX(1.1);transform-origin:left top;">Predicted B</div><div style="position:absolute;left:1001px;top:760.86px;font:normal normal 12px/12px 'Liberation Sans', sans-serif;color:#969696;letter-spacing:0px;white-space:pre;transform:scaleX(1.135);transform-origin:left top;">-1000</div><div style="position:absolute;left:1001px;top:739.94px;font:normal normal 12px/12px 'Liberation Sans', sans-serif;color:#969696;letter-spacing:0px;white-space:pre;transform:scaleX(1.135);transform-origin:left top;">0</div><div style="position:absolute;left:1001px;top:719.02px;font:normal normal 12px/12px 'Liberation Sans', sans-serif;color:#969696;letter-spacing:0px;white-space:pre;transform:scaleX(1.135);transform-origin:left top;">1000</div><div style="position:absolute;left:1001px;top:698.10px;font:normal normal 12px/12px 'Liberation Sans', sans-serif;color:#969696;letter-spacing:0px;white-space:pre;transform:scaleX(1.135);transform-origin:left top;">2000</div><div style="position:absolute;left:1001px;top:677.18px;font:normal normal 12px/12px 'Liberation Sans', sans-serif;color:#969696;letter-spacing:0px;white-space:pre;transform:scaleX(1.135);transform-origin:left top;">3000</div><div style="position:absolute;left:1001px;top:656.26px;font:normal normal 12px/12px 'Liberation Sans', sans-serif;color:#969696;letter-spacing:0px;white-space:pre;transform:scaleX(1.135);transform-origin:left top;">4000</div><div style="position:absolute;left:1001px;top:635.34px;font:normal normal 12px/12px 'Liberation Sans', sans-serif;color:#969696;letter-spacing:0px;white-space:pre;transform:scaleX(1.135);transform-origin:left top;">5000</div><div style="position:absolute;left:1001px;top:614.42px;font:normal normal 12px/12px 'Liberation Sans', sans-serif;color:#969696;letter-spacing:0px;white-space:pre;transform:scaleX(1.135);transform-origin:left top;">6000</div><div style="position:absolute;left:1001px;top:593.50px;font:normal normal 12px/12px 'Liberation Sans', sans-serif;color:#969696;letter-spacing:0px;white-space:pre;transform:scaleX(1.135);transform-origin:left top;">7000</div><div style="position:absolute;left:1001px;top:572.58px;font:normal normal 12px/12px 'Liberation Sans', sans-serif;color:#969696;letter-spacing:0px;white-space:pre;transform:scaleX(1.135);transform-origin:left top;">8000</div><div style="position:absolute;left:1001px;top:551.66px;font:normal normal 12px/12px 'Liberation Sans', sans-serif;color:#969696;letter-spacing:0px;white-space:pre;transform:scaleX(1.135);transform-origin:left top;">9000</div><div style="position:absolute;left:1001px;top:530.74px;font:normal normal 12px/12px 'Liberation Sans', sans-serif;color:#969696;letter-spacing:0px;white-space:pre;transform:scaleX(1.135);transform-origin:left top;">10000</div><div style="position:absolute;left:1001px;top:509.82px;font:normal normal 12px/12px 'Liberation Sans', sans-serif;color:#969696;letter-spacing:0px;white-space:pre;transform:scaleX(1.135);transform-origin:left top;">11000</div><div style="position:absolute;left:1001px;top:488.90px;font:normal normal 12px/12px 'Liberation Sans', sans-serif;color:#969696;letter-spacing:0px;white-space:pre;transform:scaleX(1.135);transform-origin:left top;">12000</div><div style="position:absolute;left:1001px;top:467.98px;font:normal normal 12px/12px 'Liberation Sans', sans-serif;color:#969696;letter-spacing:0px;white-space:pre;transform:scaleX(1.135);transform-origin:left top;">13000</div><div style="position:absolute;left:1044.5px;top:479.04px;font:normal normal 12px/12px 'Liberation Sans', sans-serif;color:#969696;letter-spacing:0px;white-space:pre;transform:scaleX(1.14);transform-origin:left top;">2</div><div style="position:absolute;left:1044.5px;top:536.04px;font:normal normal 12px/12px 'Liberation Sans', sans-serif;color:#969696;letter-spacing:0px;white-space:pre;transform:scaleX(1.14);transform-origin:left top;">1</div><div style="position:absolute;left:1044.5px;top:593.04px;font:normal normal 12px/12px 'Liberation Sans', sans-serif;color:#969696;letter-spacing:0px;white-space:pre;transform:scaleX(1.14);transform-origin:left top;">0</div><div style="position:absolute;left:1044.5px;top:650.04px;font:normal normal 12px/12px 'Liberation Sans', sans-serif;color:#969696;letter-spacing:0px;white-space:pre;transform:scaleX(1.14);transform-origin:left top;">-1</div><div style="position:absolute;left:1044.5px;top:707.04px;font:normal normal 12px/12px 'Liberation Sans', sans-serif;color:#969696;letter-spacing:0px;white-space:pre;transform:scaleX(1.14);transform-origin:left top;">-2</div><div style="position:absolute;left:1044.5px;top:764.04px;font:normal normal 12px/12px 'Liberation Sans', sans-serif;color:#969696;letter-spacing:0px;white-space:pre;transform:scaleX(1.14);transform-origin:left top;">-3</div><div style="position:absolute;right:381.5px;top:459.84px;font:normal normal 12px/12px 'Liberation Sans', sans-serif;color:#b4b4b4;letter-spacing:0px;white-space:pre;transform:scaleX(1.135);transform-origin:right top;">18:4</div><div style="position:absolute;left:1081px;top:105px;width:280px;height:81px;border:1px solid #b4b4b4;background:#efefef;"></div><div style="position:absolute;left:1091px;top:117.04px;font:normal normal 12px/12px 'Liberation Sans', sans-serif;color:#000;letter-spacing:0px;white-space:pre;transform:scaleX(0.985);transform-origin:left top;">SFTPRO1</div><div style="position:absolute;left:1091px;top:138.04px;font:normal normal 12px/12px 'Liberation Sans', sans-serif;color:#000;letter-spacing:0px;white-space:pre;transform:scaleX(1.018);transform-origin:left top;">SFT_PRO_MTE_L4780_2024_V1</div><div style="position:absolute;left:1090.5px;top:159.34px;font:normal normal 12px/12px 'Liberation Sans', sans-serif;color:#000;letter-spacing:0px;white-space:pre;transform:scaleX(1.14);transform-origin:left top;">2024-10-09 18:49:54.135</div><svg style="position:absolute;left:1286px;top:114px" width="64" height="64"><defs><linearGradient id="led" x1="0" y1="0" x2="0" y2="1"><stop offset="0" stop-color="#8a8a8a"/><stop offset="0.6" stop-color="#8e8e8e"/><stop offset="1" stop-color="#a0a0a0"/></linearGradient><linearGradient id="ledh" x1="0" y1="0" x2="0" y2="1"><stop offset="0" stop-color="#dedede"/><stop offset="1" stop-color="#a2a2a2"/></linearGradient></defs><circle cx="32" cy="32" r="29.8" fill="url(#led)" stroke="#262626" stroke-width="0.8"/><ellipse cx="32" cy="21.5" rx="25.3" ry="19" fill="url(#ledh)"/></svg><div style="position:absolute;left:1081px;top:195px;width:280px;height:597px;border:1px solid #b4b4b4;background:#efefef;"></div><div style="position:absolute;left:1091px;top:210.84px;font:normal normal 12px/12px 'Liberation Sans', sans-serif;color:#000;letter-spacing:0px;white-space:pre;transform:scaleX(1.125);transform-origin:left top;">Time span [s]</div><div style="position:absolute;left:1090.5px;top:240.84px;font:normal normal 12px/12px 'Liberation Sans', sans-serif;color:#000;letter-spacing:0px;white-space:pre;transform:scaleX(1.115);transform-origin:left top;">Downsample</div><div style="position:absolute;left:1179px;top:205px;width:172px;height:20px;border:1px solid #a8a8a8;border-radius:3px;background:#fff;"></div><div style="position:absolute;left:1338px;top:206px;width:1px;height:20px;background:#d0d0d0;"></div><div style="position:absolute;left:1339px;top:206px;width:12px;height:20px;background:linear-gradient(#fafafa,#e6e6e6);border-radius:0 2px 2px 0;"></div><svg style="position:absolute;left:1339px;top:206px" width="12" height="20"><path d="M2.5 8 L6 4 L9.5 8 Z" fill="#404040"/><path d="M2.5 12 L6 16 L9.5 12 Z" fill="#404040"/></svg><div style="position:absolute;left:1183.5px;top:210.84px;font:normal normal 12px/12px 'Liberation Sans', sans-serif;color:#000;letter-spacing:0px;white-space:pre;transform:scaleX(1.15);transform-origin:left top;">60</div><div style="position:absolute;left:1179px;top:235px;width:172px;height:20px;border:1px solid #a8a8a8;border-radius:3px;background:#fff;"></div><div style="position:absolute;left:1338px;top:236px;width:1px;height:20px;background:#d0d0d0;"></div><div style="position:absolute;left:1339px;top:236px;width:12px;height:20px;background:linear-gradient(#fafafa,#e6e6e6);border-radius:0 2px 2px 0;"></div><svg style="position:absolute;left:1339px;top:236px" width="12" height="20"><path d="M2.5 8 L6 4 L9.5 8 Z" fill="#404040"/><path d="M2.5 12 L6 16 L9.5 12 Z" fill="#404040"/></svg><div style="position:absolute;left:1183.5px;top:240.84px;font:normal normal 12px/12px 'Liberation Sans', sans-serif;color:#000;letter-spacing:0px;white-space:pre;transform:scaleX(1.15);transform-origin:left top;">100</div><div style="position:absolute;left:1091px;top:264px;width:260px;height:21px;border:1px solid #a8a8a8;border-radius:3px;background:linear-gradient(#fbfbfb,#e8e8e8);"></div><div style="position:absolute;left:922px;width:600px;text-align:center;top:269.84px;font:normal normal 12px/12px 'Liberation Sans', sans-serif;color:#000;letter-spacing:0px;white-space:pre;transform:scaleX(1.095);transform-origin:center top;">Reset Axis</div><div style="position:absolute;left:1090.5px;top:755.84px;font:normal normal 12px/12px 'Liberation Sans', sans-serif;color:#000;letter-spacing:0px;white-space:pre;transform:scaleX(1.125);transform-origin:left top;">Ready. Waiting for next cycle.</div><div style="position:absolute;left:1091px;top:775px;width:260px;height:6px;border:1px solid #a8a8a8;border-radius:4px;background:#fff;"></div><div style="position:absolute;left:682px;top:804px;width:1px;height:1px;background:#b4b4b4;"></div><div style="position:absolute;left:685px;top:804px;width:1px;height:1px;background:#b4b4b4;"></div><div style="position:absolute;left:688px;top:804px;width:1px;height:1px;background:#b4b4b4;"></div><div style="position:absolute;left:691px;top:804px;width:1px;height:1px;background:#b4b4b4;"></div><div style="position:absolute;left:694px;top:804px;width:1px;height:1px;background:#b4b4b4;"></div><div style="position:absolute;left:697px;top:804px;width:1px;height:1px;background:#b4b4b4;"></div><svg style="position:absolute;left:1344px;top:811px" width="28" height="13"><rect x="1.5" y="1.5" width="10.5" height="10.5" rx="2" fill="none" stroke="#6a6a6a" stroke-width="1"/><rect x="5" y="3.5" width="4.6" height="4.4" rx="1" fill="none" stroke="#6a6a6a" stroke-width="1"/><rect x="3.2" y="5.7" width="4.4" height="3.9" rx="1" fill="#efefef" stroke="#6a6a6a" stroke-width="1"/><rect x="15.5" y="1.5" width="10.5" height="10.5" rx="2" fill="none" stroke="#6a6a6a" stroke-width="1"/><path d="M18 4 L23.5 9.5 M23.5 4 L18 9.5" stroke="#555" stroke-width="1.7"/></svg><div style="position:absolute;left:5px;top:827px;width:1335px;height:21px;border:1px solid #a8a8a8;border-radius:3px;background:#fff;"></div><div style="position:absolute;left:7.5px;top:832.54px;font:italic normal 12px/12px 'Liberation Mono', monospace;color:#000;letter-spacing:0.03px;white-space:pre;">2024-10-09 18:49:52,072 - sps_apps.hysteresis_prediction.widgets.trim_widget._view - INFO - Trim applied. Updating plot.</div><div style="position:absolute;left:1348px;top:827px;width:22px;height:21px;border:1px solid #b0b0b0;border-radius:3px;background:linear-gradient(#f6f6f6,#e8e8e8);"></div><svg style="position:absolute;left:1354px;top:834px" width="12" height="8"><path d="M2 6 L6 2 L10 6 Z" fill="#333"/></svg><div style="position:absolute;left:1369px;top:860px;width:1px;height:1px;background:#b4b4b4;"></div><div style="position:absolute;left:1366px;top:863px;width:1px;height:1px;background:#b4b4b4;"></div><div style="position:absolute;left:1369px;top:863px;width:1px;height:1px;background:#b4b4b4;"></div><div style="position:absolute;left:1363px;top:866px;width:1px;height:1px;background:#b4b4b4;"></div><div style="position:absolute;left:1366px;top:866px;width:1px;height:1px;background:#b4b4b4;"></div><div style="position:absolute;left:1369px;top:866px;width:1px;height:1px;background:#b4b4b4;"></div><div style="position:absolute;left:1360px;top:869px;width:1px;height:1px;background:#b4b4b4;"></div><div style="position:absolute;left:1363px;top:869px;width:1px;height:1px;background:#b4b4b4;"></div><div style="position:absolute;left:1366px;top:869px;width:1px;height:1px;background:#b4b4b4;"></div><div style="position:absolute;left:1369px;top:869px;width:1px;height:1px;background:#b4b4b4;"></div></body></html>
